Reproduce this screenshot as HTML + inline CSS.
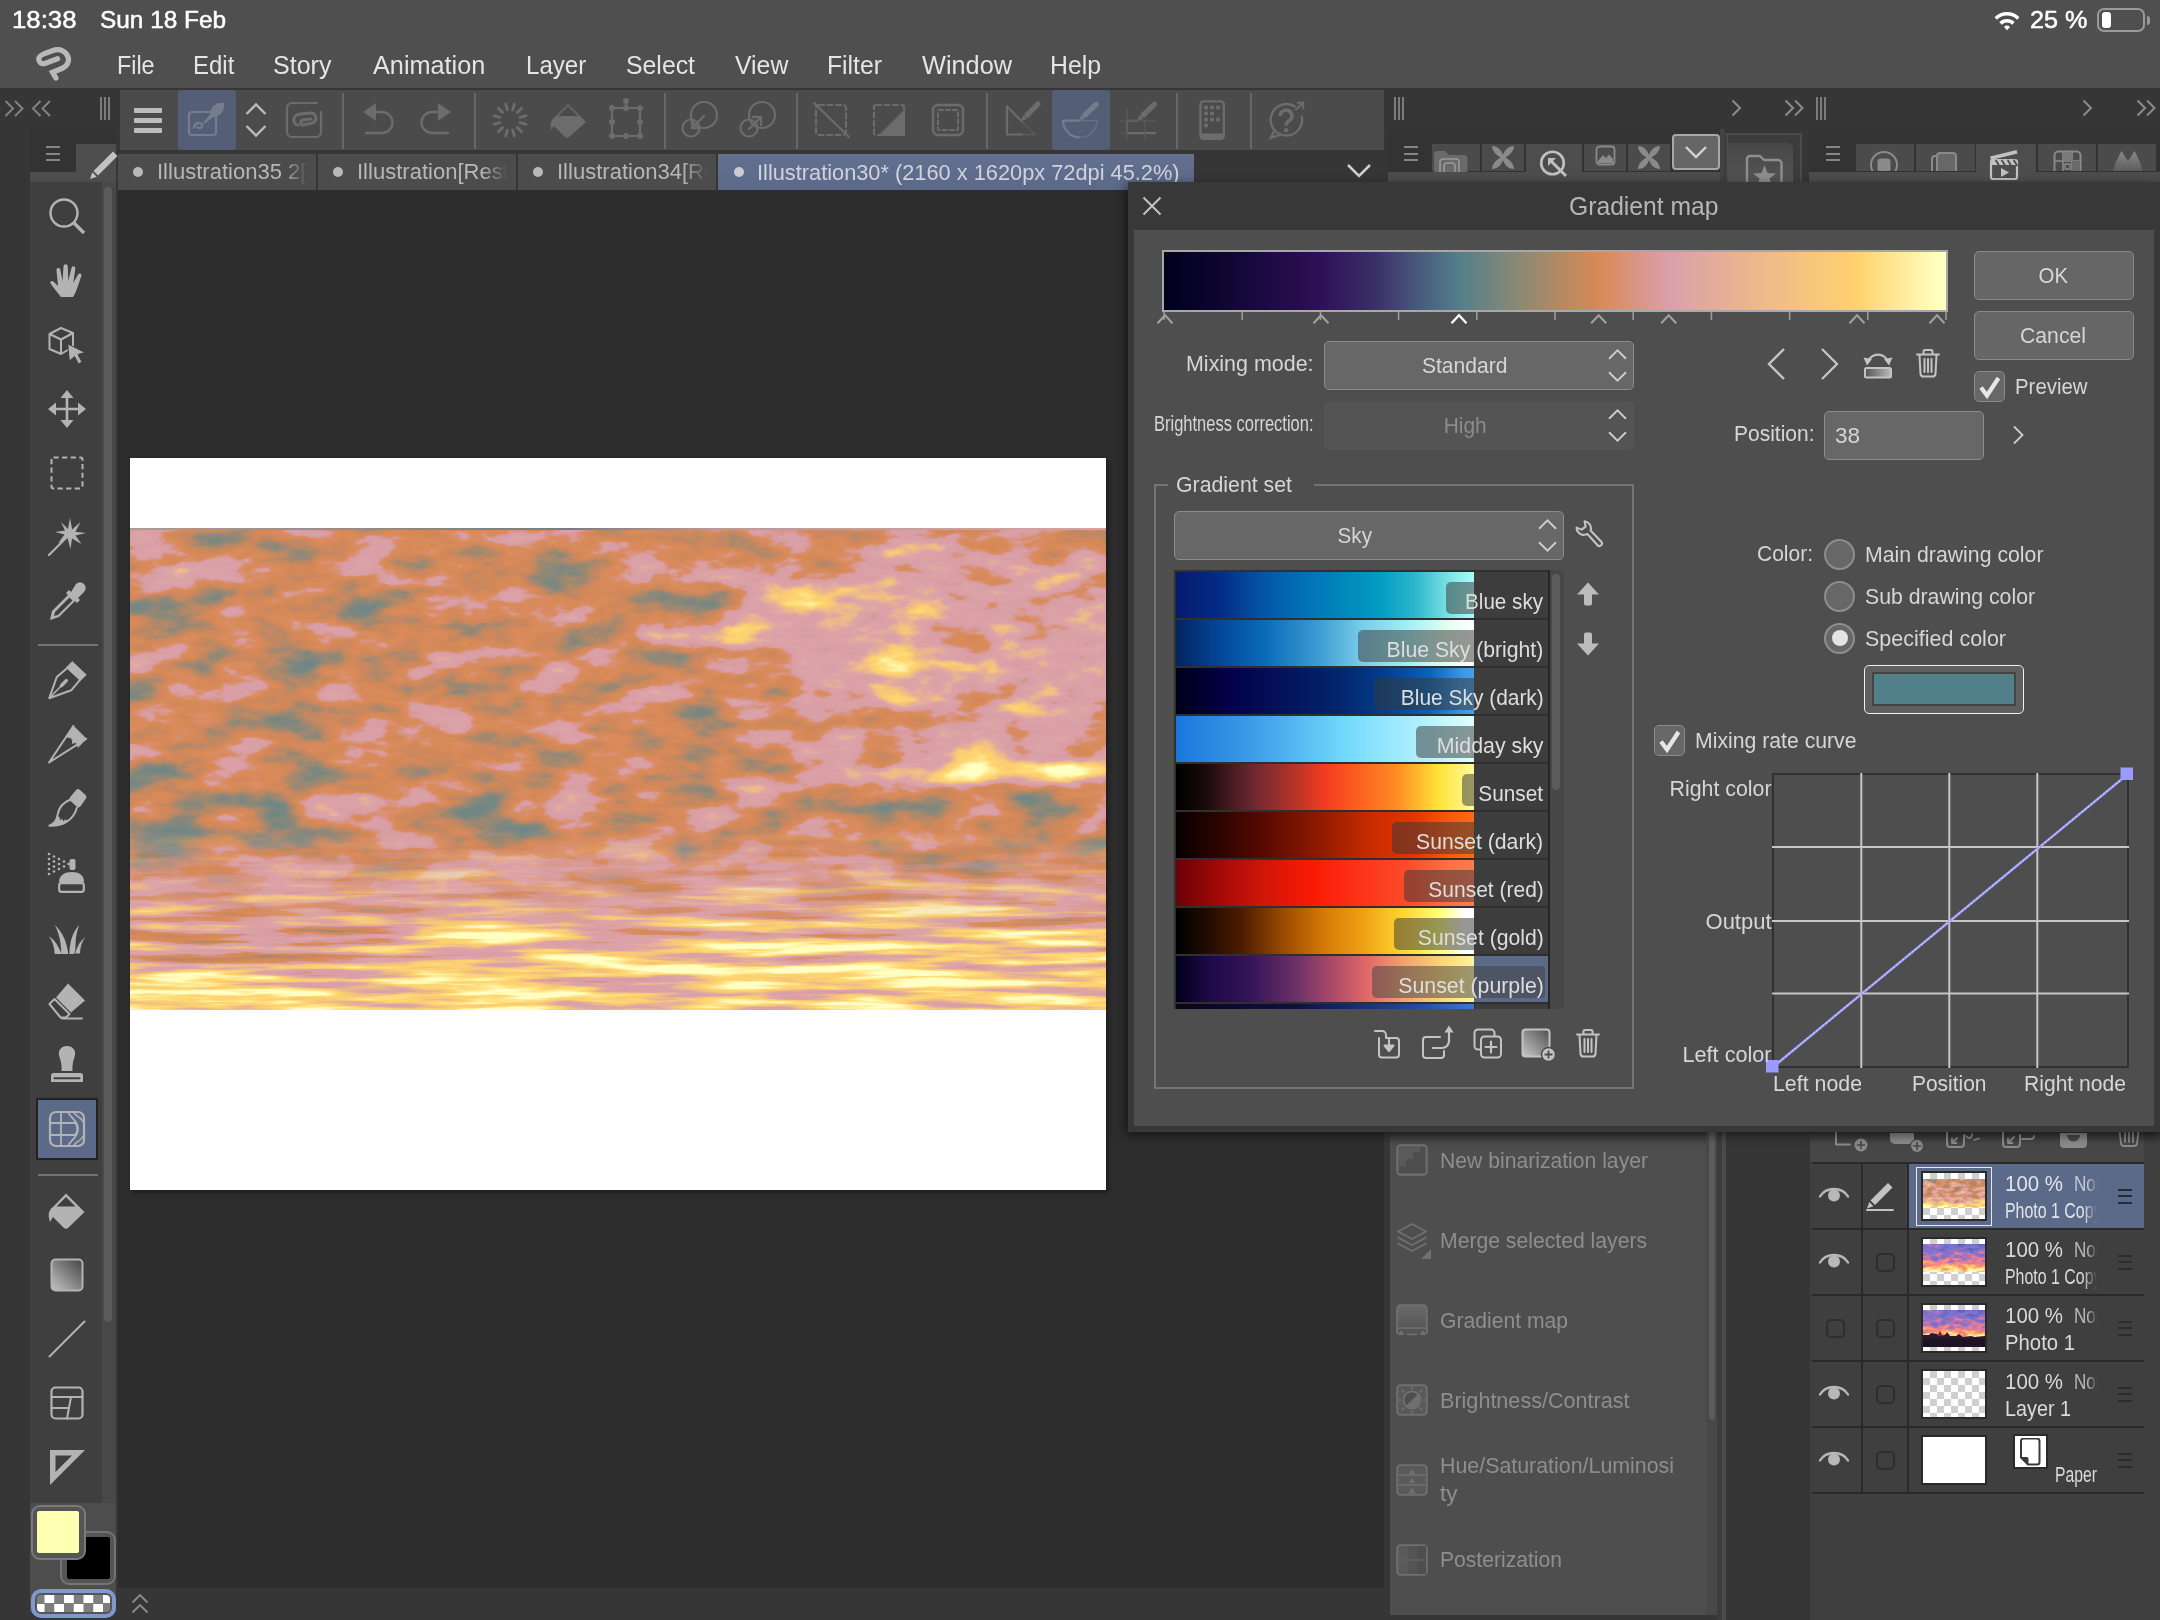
<!DOCTYPE html>
<html><head><meta charset="utf-8"><title>Gradient map</title><style>
html,body{margin:0;padding:0;}
body{width:2160px;height:1620px;overflow:hidden;background:#363636;font-family:"Liberation Sans",sans-serif;position:relative;}
div,span,svg{box-sizing:border-box;}
</style></head><body>
<!-- p_base -->
<div style="position:absolute;left:0px;top:0px;width:2160px;height:88px;background:#4f4f4f;"></div>
<div style="position:absolute;left:0px;top:88px;width:2160px;height:1532px;background:#363636;"></div>
<div style="position:absolute;left:120px;top:90px;width:1264px;height:60px;background:#4b4b4b;"></div>
<div style="position:absolute;left:118px;top:190px;width:1266px;height:1398px;background:#2d2d2d;"></div>
<div style="position:absolute;left:118px;top:1588px;width:1266px;height:32px;background:#363636;"></div>
<!-- p_top -->
<span style="position:absolute;top:6.10px;font-size:24px;line-height:28.80px;color:#ffffff;white-space:pre;left:12.00px;transform-origin:0 50%;transform:scaleX(1.0740);-webkit-text-stroke:0.5px #ffffff;">18:38</span>
<span style="position:absolute;top:6.10px;font-size:24px;line-height:28.80px;color:#ffffff;white-space:pre;left:100.00px;transform-origin:0 50%;transform:scaleX(1.0154);-webkit-text-stroke:0.5px #ffffff;">Sun 18 Feb</span>
<span style="position:absolute;top:6.10px;font-size:24px;line-height:28.80px;color:#ffffff;white-space:pre;left:2030.00px;transform-origin:0 50%;transform:scaleX(1.0511);-webkit-text-stroke:0.5px #ffffff;">25 %</span>
<svg style="position:absolute;left:1993px;top:9px;" width="28" height="22" viewBox="0 0 28 22" fill="none" stroke-linecap="round" stroke-linejoin="round"><path d="M1.5 8.2 A17.5 17.5 0 0 1 26.5 8.2 L24 10.8 A14 14 0 0 0 4 10.8 Z M6.3 13.1 A11 11 0 0 1 21.7 13.1 L19.2 15.7 A7.5 7.5 0 0 0 8.8 15.7 Z M11 18 A4.3 4.3 0 0 1 17 18 L14 21.2 Z" fill="#fff"/></svg>
<div style="position:absolute;left:2097px;top:8px;width:48px;height:24px;border:2px solid #9a9a9a;border-radius:7px;"></div>
<div style="position:absolute;left:2101.5px;top:12.3px;width:9.5px;height:15.4px;background:#fff;border-radius:3px;"></div>
<div style="position:absolute;left:2147px;top:15.5px;width:3px;height:9px;background:#9a9a9a;border-radius:0 3px 3px 0;"></div>
<span style="position:absolute;top:50.40px;font-size:26px;line-height:31.20px;color:#e4e4e4;white-space:pre;left:116.70px;transform-origin:0 50%;transform:scaleX(0.8974);">File</span>
<span style="position:absolute;top:50.40px;font-size:26px;line-height:31.20px;color:#e4e4e4;white-space:pre;left:192.70px;transform-origin:0 50%;transform:scaleX(0.9218);">Edit</span>
<span style="position:absolute;top:50.40px;font-size:26px;line-height:31.20px;color:#e4e4e4;white-space:pre;left:273.30px;transform-origin:0 50%;transform:scaleX(0.9623);">Story</span>
<span style="position:absolute;top:50.40px;font-size:26px;line-height:31.20px;color:#e4e4e4;white-space:pre;left:372.70px;transform-origin:0 50%;transform:scaleX(0.9712);">Animation</span>
<span style="position:absolute;top:50.40px;font-size:26px;line-height:31.20px;color:#e4e4e4;white-space:pre;left:525.70px;transform-origin:0 50%;transform:scaleX(0.9271);">Layer</span>
<span style="position:absolute;top:50.40px;font-size:26px;line-height:31.20px;color:#e4e4e4;white-space:pre;left:626.00px;transform-origin:0 50%;transform:scaleX(0.9548);">Select</span>
<span style="position:absolute;top:50.40px;font-size:26px;line-height:31.20px;color:#e4e4e4;white-space:pre;left:735.00px;transform-origin:0 50%;transform:scaleX(0.9536);">View</span>
<span style="position:absolute;top:50.40px;font-size:26px;line-height:31.20px;color:#e4e4e4;white-space:pre;left:827.30px;transform-origin:0 50%;transform:scaleX(0.9519);">Filter</span>
<span style="position:absolute;top:50.40px;font-size:26px;line-height:31.20px;color:#e4e4e4;white-space:pre;left:921.70px;transform-origin:0 50%;transform:scaleX(0.9732);">Window</span>
<span style="position:absolute;top:50.40px;font-size:26px;line-height:31.20px;color:#e4e4e4;white-space:pre;left:1050.00px;transform-origin:0 50%;transform:scaleX(0.9537);">Help</span>
<svg style="position:absolute;left:35px;top:47px;" width="38" height="34" viewBox="0 0 38 34" fill="none" stroke-linecap="round" stroke-linejoin="round"><path d="M22.5 11.85 L10.55 16.25 C6.5 17.6 3.4 15.2 3.8 11.6 C4.1 9.3 6.2 7.9 10.55 6.15 L18 3.4 C24.5 1.3 31 3.8 33.1 10.2 C34.6 15 31.6 19.4 27.4 21.2 L17.55 25.3 L20.9 31" stroke="#b9b9b9" stroke-width="5.3" stroke-linejoin="miter" stroke-miterlimit="10"/></svg>
<!-- p_cmd -->
<div style="position:absolute;left:134px;top:108px;width:28px;height:4.5px;background:#bcbcbc;border-radius:1px;"></div>
<div style="position:absolute;left:134px;top:118px;width:28px;height:4.5px;background:#bcbcbc;border-radius:1px;"></div>
<div style="position:absolute;left:134px;top:128px;width:28px;height:4.5px;background:#bcbcbc;border-radius:1px;"></div>
<div style="position:absolute;left:178px;top:90px;width:58px;height:60px;background:#555e77;border-radius:3px;"></div>
<svg style="position:absolute;left:186px;top:100px;" width="42" height="40" viewBox="0 0 42 40" fill="none" stroke-linecap="round" stroke-linejoin="round"><rect x="3" y="12" width="27" height="23" rx="3" stroke="#747c8e" stroke-width="2.2"/><path d="M8 28 c0-5 6-7 8-3 c1 3-3 4-5 2" stroke="#747c8e" stroke-width="2.2"/><path d="M14 27 L25 13 C24 7 30 2 38 3 C39 10 35 16 29 16 Z" fill="#747c8e"/></svg>
<svg style="position:absolute;left:244px;top:100px;" width="24" height="40" viewBox="0 0 24 40" fill="none" stroke-linecap="round" stroke-linejoin="round"><path d="M2.5 14 L12 4.5 L21.5 14 M2.5 26 L12 35.5 L21.5 26" stroke="#bcbcbc" stroke-width="2.4" stroke-linecap="butt" stroke-linejoin="miter"/></svg>
<svg style="position:absolute;left:284px;top:100px;" width="40" height="40" viewBox="0 0 40 40" fill="none" stroke-linecap="round" stroke-linejoin="round"><path d="M33 3 H8 a5 5 0 0 0 -5 5 V32 a5 5 0 0 0 5 5 H32 a5 5 0 0 0 5-5 V12" stroke="#6c6c6c" stroke-width="2.2"/><path d="M14 25 c-6-1-6-10 2-11 l10-1 c7 0 8 8 2 10 l-9 2 c-3 0-3-5 0-5 l8-1" stroke="#6c6c6c" stroke-width="3"/></svg>
<div style="position:absolute;left:342px;top:93px;width:2px;height:56px;background:#676767;"></div>
<svg style="position:absolute;left:358px;top:100px;" width="40" height="40" viewBox="0 0 40 40" fill="none" stroke-linecap="round" stroke-linejoin="round"><path d="M5 12 L18 3 V21 Z" fill="#6c6c6c"/><path d="M16 12 H24 a10.5 10.5 0 0 1 0 21 H8" stroke="#6c6c6c" stroke-width="2.4"/></svg>
<svg style="position:absolute;left:416px;top:100px;" width="40" height="40" viewBox="0 0 40 40" fill="none" stroke-linecap="round" stroke-linejoin="round"><path d="M35 12 L22 3 V21 Z" fill="#6c6c6c"/><path d="M24 12 H16 a10.5 10.5 0 0 0 0 21 H32" stroke="#6c6c6c" stroke-width="2.4"/></svg>
<div style="position:absolute;left:474px;top:93px;width:2px;height:56px;background:#676767;"></div>
<svg style="position:absolute;left:490px;top:100px;" width="40" height="40" viewBox="0 0 40 40" fill="none" stroke-linecap="round" stroke-linejoin="round"><path d="M30.1 22.7 L35.9 24.3 M27.4 27.4 L31.7 31.7 M22.7 30.1 L24.3 35.9 M17.3 30.1 L15.7 35.9 M12.6 27.4 L8.3 31.7 M9.9 22.7 L4.1 24.3 M9.9 17.3 L4.1 15.7 M12.6 12.6 L8.3 8.3 M17.3 9.9 L15.7 4.1 M22.7 9.9 L24.3 4.1 M27.4 12.6 L31.7 8.3 M30.1 17.3 L35.9 15.7 " stroke="#6c6c6c" stroke-width="2.8"/></svg>
<svg style="position:absolute;left:548px;top:100px;" width="42" height="40" viewBox="0 0 42 40" fill="none" stroke-linecap="round" stroke-linejoin="round"><path d="M20 4 L38 22 L21 37 Q19 38.5 17 37 L6 26 L3 30 Q1 20 8 16 Z" fill="#6c6c6c"/><path d="M10 16 L20 6 L30 16 Z" fill="#4b4b4b"/></svg>
<svg style="position:absolute;left:606px;top:98px;" width="40" height="42" viewBox="0 0 40 42" fill="none" stroke-linecap="round" stroke-linejoin="round"><rect x="6" y="10" width="28" height="28" stroke="#6c6c6c" stroke-width="2.2"/><path d="M20 10 V3" stroke="#6c6c6c" stroke-width="2.2"/><circle cx="6" cy="10" r="3" fill="#6c6c6c"/><circle cx="20" cy="10" r="3" fill="#6c6c6c"/><circle cx="34" cy="10" r="3" fill="#6c6c6c"/><circle cx="6" cy="24" r="3" fill="#6c6c6c"/><circle cx="34" cy="24" r="3" fill="#6c6c6c"/><circle cx="6" cy="38" r="3" fill="#6c6c6c"/><circle cx="20" cy="38" r="3" fill="#6c6c6c"/><circle cx="34" cy="38" r="3" fill="#6c6c6c"/><circle cx="20" cy="3" r="3" fill="#6c6c6c"/></svg>
<div style="position:absolute;left:664px;top:93px;width:2px;height:56px;background:#676767;"></div>
<svg style="position:absolute;left:680px;top:100px;" width="40" height="40" viewBox="0 0 40 40" fill="none" stroke-linecap="round" stroke-linejoin="round"><circle cx="24" cy="15" r="13" stroke="#6c6c6c" stroke-width="2.2"/><circle cx="11" cy="28" r="8.5" stroke="#6c6c6c" stroke-width="2.2"/><path d="M24 16 L12 28 M12 20 V28 H20" stroke="#6c6c6c" stroke-width="2.4"/></svg>
<svg style="position:absolute;left:738px;top:100px;" width="40" height="40" viewBox="0 0 40 40" fill="none" stroke-linecap="round" stroke-linejoin="round"><circle cx="24" cy="15" r="13" stroke="#6c6c6c" stroke-width="2.2"/><circle cx="11" cy="28" r="8.5" stroke="#6c6c6c" stroke-width="2.2"/><path d="M11 29 L23 17 M15 17 H23 V25" stroke="#6c6c6c" stroke-width="2.4"/></svg>
<div style="position:absolute;left:796px;top:93px;width:2px;height:56px;background:#676767;"></div>
<svg style="position:absolute;left:812px;top:100px;" width="40" height="40" viewBox="0 0 40 40" fill="none" stroke-linecap="round" stroke-linejoin="round"><rect x="4" y="5" width="30" height="30" rx="3" stroke="#6c6c6c" stroke-width="2.2" stroke-dasharray="5 3.5"/><path d="M2 3 L37 37" stroke="#6c6c6c" stroke-width="2.2"/></svg>
<svg style="position:absolute;left:870px;top:100px;" width="40" height="40" viewBox="0 0 40 40" fill="none" stroke-linecap="round" stroke-linejoin="round"><rect x="4" y="5" width="30" height="30" rx="2" stroke="#6c6c6c" stroke-width="2.2" stroke-dasharray="5 3.5"/><path d="M8 36 L35 9 V36 Z" fill="#6c6c6c"/></svg>
<svg style="position:absolute;left:929px;top:100px;" width="40" height="40" viewBox="0 0 40 40" fill="none" stroke-linecap="round" stroke-linejoin="round"><rect x="4" y="5" width="30" height="30" rx="5" stroke="#6c6c6c" stroke-width="2.4"/><rect x="9" y="10" width="20" height="20" rx="1" stroke="#6c6c6c" stroke-width="2" stroke-dasharray="4 3"/></svg>
<div style="position:absolute;left:986px;top:93px;width:2px;height:56px;background:#676767;"></div>
<div style="position:absolute;left:1052px;top:90px;width:58px;height:60px;background:#555e77;border-radius:3px;"></div>
<svg style="position:absolute;left:990px;top:90px" width="330" height="60" viewBox="990 90 330 60" fill="none" stroke-linecap="round" stroke-linejoin="round"><path d="M1007 106.5 V134.5 H1023" stroke="#6c6c6c" stroke-width="2.2" stroke-linecap="butt" stroke-linejoin="miter"/><path d="M1007 106.5 L1022 121.500" stroke="#6c6c6c" stroke-width="2"/><path d="M1022 121.500 L1035 134.500 H1023" stroke="#5c5c5c" stroke-width="1.400"/><path d="M1021.3 121.0 L1027.1 119.0 L1023.2 115.2 Z" fill="#6c6c6c"/><path d="M1027.3 114.9 L1037.9 104.1" stroke="#6c6c6c" stroke-width="5.4" stroke-linecap="round"/><path d="M1026.0 116.2 L1028.7 113.5" stroke="#6c6c6c" stroke-width="5.4" stroke-linecap="butt"/><path d="M1079.800 120.600 H1063 A17 16.600 0 0 0 1080 137.400" stroke="#747c8e" stroke-width="2.200" stroke-linecap="butt"/><path d="M1079.800 120.600 H1097 A17 16.600 0 0 1 1080 137.400" stroke="#69718a" stroke-width="1.300"/><path d="M1079.5 120.3 L1085.3 118.4 L1081.6 114.5 Z" fill="#747c8e"/><path d="M1085.6 114.4 L1096.1 104.4" stroke="#747c8e" stroke-width="5.4" stroke-linecap="round"/><path d="M1084.3 115.7 L1087.1 113.0" stroke="#747c8e" stroke-width="5.4" stroke-linecap="butt"/><path d="M1138 120.800 H1127 V133.200 H1156" stroke="#6c6c6c" stroke-width="2.200" stroke-linecap="butt" stroke-linejoin="miter"/><path d="M1120 120.800 H1156 M1120 133.200 H1127 M1127 108 V138 M1145 120 V138" stroke="#5a5a5a" stroke-width="1.300"/><path d="M1137.5 120.5 L1143.3 118.7 L1139.6 114.8 Z" fill="#6c6c6c"/><path d="M1143.7 114.6 L1154.4 104.4" stroke="#6c6c6c" stroke-width="5.4" stroke-linecap="round"/><path d="M1142.4 115.9 L1145.1 113.3" stroke="#6c6c6c" stroke-width="5.4" stroke-linecap="butt"/><rect x="1200.500" y="101.400" width="23.300" height="37.300" rx="3" stroke="#6c6c6c" stroke-width="2.400"/><path d="M1200.500 133.500 H1223.800 V136 a3 3 0 0 1 -3 3 H1203.500 a3 3 0 0 1 -3 -3 Z" fill="#6c6c6c"/><rect x="1204.1" y="105.6" width="3.800" height="3.800" fill="#6c6c6c"/><rect x="1210.1" y="105.6" width="3.800" height="3.800" fill="#6c6c6c"/><rect x="1216.1" y="105.6" width="3.800" height="3.800" fill="#6c6c6c"/><rect x="1204.1" y="111.6" width="3.800" height="3.800" fill="#6c6c6c"/><rect x="1210.1" y="111.6" width="3.800" height="3.800" fill="#6c6c6c"/><rect x="1204.1" y="117.6" width="3.800" height="3.800" fill="#6c6c6c"/><rect x="1210.1" y="117.6" width="3.800" height="3.800" fill="#6c6c6c"/><rect x="1216.1" y="117.6" width="3.800" height="3.800" fill="#6c6c6c"/><rect x="1204.1" y="123.6" width="3.800" height="3.800" fill="#6c6c6c"/><path d="M1295.500 107 A15.700 15.700 0 1 0 1301.500 115.500" stroke="#6c6c6c" stroke-width="2.300" stroke-linecap="butt"/><path d="M1274.500 130 L1271 137.800 L1280 134.800" stroke="#6c6c6c" stroke-width="2.300" stroke-linejoin="miter"/><path d="M1295.500 110 L1303 102.800 M1297 102.800 H1303.200 V109" stroke="#6c6c6c" stroke-width="2" stroke-linecap="butt" stroke-linejoin="miter"/><path d="M1280.300 116 a5.800 5.800 0 1 1 8.600 5 c-2.200 1.300 -2.800 2.300 -2.800 4.600" stroke="#6c6c6c" stroke-width="3.700" stroke-linecap="butt"/><circle cx="1286.100" cy="130.300" r="2.300" fill="#6c6c6c"/></svg>
<div style="position:absolute;left:1176px;top:93px;width:2px;height:56px;background:#676767;"></div>
<div style="position:absolute;left:1250px;top:93px;width:2px;height:56px;background:#676767;"></div>
<!-- p_tabs -->
<div style="position:absolute;left:118px;top:154px;width:198px;height:36px;background:#4c4c4c;overflow:hidden;"><div style="position:absolute;left:15px;top:13px;width:10px;height:10px;border-radius:5px;background:#b8b8b8"></div><span style="position:absolute;top:5.10px;font-size:22px;line-height:26.40px;color:#b8b8b8;white-space:pre;left:38.70px;transform-origin:0 50%;transform:scaleX(1.0020);">Illustration35 2[l</span><div style="position:absolute;right:0;top:0;width:34px;height:36px;background:linear-gradient(90deg,rgba(76,76,76,0),#4c4c4c 75%)"></div></div>
<div style="position:absolute;left:318px;top:154px;width:198px;height:36px;background:#4c4c4c;overflow:hidden;"><div style="position:absolute;left:15px;top:13px;width:10px;height:10px;border-radius:5px;background:#b8b8b8"></div><span style="position:absolute;top:5.10px;font-size:22px;line-height:26.40px;color:#b8b8b8;white-space:pre;left:38.70px;transform-origin:0 50%;transform:scaleX(1.0020);">Illustration[Resto</span><div style="position:absolute;right:0;top:0;width:34px;height:36px;background:linear-gradient(90deg,rgba(76,76,76,0),#4c4c4c 75%)"></div></div>
<div style="position:absolute;left:518px;top:154px;width:198px;height:36px;background:#4c4c4c;overflow:hidden;"><div style="position:absolute;left:15px;top:13px;width:10px;height:10px;border-radius:5px;background:#b8b8b8"></div><span style="position:absolute;top:5.10px;font-size:22px;line-height:26.40px;color:#b8b8b8;white-space:pre;left:38.70px;transform-origin:0 50%;transform:scaleX(1.0020);">Illustration34[Re</span><div style="position:absolute;right:0;top:0;width:34px;height:36px;background:linear-gradient(90deg,rgba(76,76,76,0),#4c4c4c 75%)"></div></div>
<div style="position:absolute;left:718px;top:154px;width:476px;height:36px;background:linear-gradient(180deg,#64708f,#5b6888);"><div style="position:absolute;left:16px;top:13px;width:10px;height:10px;border-radius:5px;background:#c9cdd6"></div><span style="position:absolute;top:4.80px;font-size:22.5px;line-height:27.00px;color:#cfd3dc;white-space:pre;left:38.70px;transform-origin:0 50%;transform:scaleX(0.9679);">Illustration30* (2160 x 1620px 72dpi 45.2%)</span></div>
<svg style="position:absolute;left:1344px;top:160px;" width="30" height="22" viewBox="0 0 30 22" fill="none" stroke-linecap="round" stroke-linejoin="round"><path d="M4 5 L15 16 L26 5" stroke="#cfcfcf" stroke-width="2.6" stroke-linecap="butt" stroke-linejoin="miter"/></svg>
<!-- p_left -->
<svg style="position:absolute;left:3px;top:98px;" width="52" height="20" viewBox="0 0 52 20" fill="none" stroke-linecap="round" stroke-linejoin="round"><path d="M2.5 3 L10 10.5 L2.5 18 M12 3 L19.5 10.5 L12 18 M37.5 3 L30 10.5 L37.5 18 M47 3 L39.5 10.5 L47 18" stroke="#828282" stroke-width="2" stroke-linecap="butt" stroke-linejoin="miter"/></svg>
<div style="position:absolute;left:100px;top:96.5px;width:1.8px;height:23.5px;background:#7c7c7c;"></div>
<div style="position:absolute;left:104.2px;top:96.5px;width:1.8px;height:23.5px;background:#7c7c7c;"></div>
<div style="position:absolute;left:108.4px;top:96.5px;width:1.8px;height:23.5px;background:#7c7c7c;"></div>
<div style="position:absolute;left:30px;top:129px;width:86px;height:43px;background:#333333;"></div>
<div style="position:absolute;left:45.7px;top:146px;width:14.3px;height:2px;background:#858585;"></div>
<div style="position:absolute;left:45.7px;top:152.5px;width:14.3px;height:2px;background:#858585;"></div>
<div style="position:absolute;left:45.7px;top:159px;width:14.3px;height:2px;background:#858585;"></div>
<div style="position:absolute;left:75.7px;top:144px;width:40.3px;height:28px;background:#4d4d4d;"></div>
<div style="position:absolute;left:30px;top:171.5px;width:86px;height:10px;background:#4d4d4d;"></div>
<svg style="position:absolute;left:86px;top:146px;" width="32" height="34" viewBox="0 0 32 34" fill="none" stroke-linecap="round" stroke-linejoin="round"><path d="M27 5.5 L31.5 10 L12 29.5 L7.5 25 Z" fill="#c2c2c2"/><path d="M6.3 26.3 L10.7 30.7 L4 33 Z" fill="#c2c2c2"/></svg>
<div style="position:absolute;left:30px;top:181.5px;width:86px;height:1322px;background:#3f3f3f;"></div>
<div style="position:absolute;left:102px;top:181.5px;width:14px;height:1322px;background:#484848;"></div>
<div style="position:absolute;left:104.3px;top:186.5px;width:7.7px;height:1135px;background:#5b5b5b;border-radius:4px;"></div>
<div style="position:absolute;left:38px;top:644px;width:60px;height:2px;background:#727272;"></div>
<div style="position:absolute;left:38px;top:1174px;width:60px;height:2px;background:#727272;"></div>
<svg style="position:absolute;left:47.0px;top:197.0px;" width="40" height="40" viewBox="0 0 40 40" fill="none" stroke-linecap="round" stroke-linejoin="round"><circle cx="17" cy="16" r="13.5" stroke="#b3b3b3" stroke-width="2.4"/><path d="M27 26 L37 36" stroke="#b3b3b3" stroke-width="3.4" stroke-linecap="butt"/></svg>
<svg style="position:absolute;left:47.0px;top:261.0px;" width="40" height="40" viewBox="0 0 40 40" fill="none" stroke-linecap="round" stroke-linejoin="round"><path d="M14 36 C9 30 6 26 3.5 22.5 C2.5 20.5 5 19 7 21 L11 25 L9.5 9.5 C9.3 6.5 13 6.3 13.4 9 L15.5 20 L16.5 5.5 C16.7 2.5 20.6 2.6 20.8 5.5 L21.3 20 L24.5 7 C25.2 4.3 28.8 5.1 28.3 8 L26.3 22 L31 13.5 C32.3 11.3 35.3 12.8 34.3 15.3 C31 24 30 30 26 36 Z" fill="#b3b3b3"/></svg>
<svg style="position:absolute;left:47.0px;top:325.0px;" width="40" height="40" viewBox="0 0 40 40" fill="none" stroke-linecap="round" stroke-linejoin="round"><path d="M14 3 L26 8 V22 L14 29 L2.5 24 V9 Z M2.5 9 L14 14.5 L26 8 M14 14.5 V29" stroke="#b3b3b3" stroke-width="2"/><path d="M21 19 L38 27.5 L31 29.5 L35 37 L31.5 39 L27.5 31.5 L22.5 36 Z" fill="#b3b3b3" stroke="#3f3f3f" stroke-width="1"/></svg>
<svg style="position:absolute;left:47.0px;top:389.0px;" width="40" height="40" viewBox="0 0 40 40" fill="none" stroke-linecap="round" stroke-linejoin="round"><path d="M20 7 V33 M7 20 H33" stroke="#b3b3b3" stroke-width="2.6" stroke-linecap="butt"/><path d="M20 1 L26.5 9 H13.5 Z M20 39 L26.5 31 H13.5 Z M1 20 L9 13.5 V26.5 Z M39 20 L31 13.5 V26.5 Z" fill="#b3b3b3"/></svg>
<svg style="position:absolute;left:47.0px;top:453.0px;" width="40" height="40" viewBox="0 0 40 40" fill="none" stroke-linecap="round" stroke-linejoin="round"><rect x="4.5" y="4.5" width="31" height="31" rx="2" stroke="#b3b3b3" stroke-width="2" stroke-dasharray="5.2 3.4" stroke-linecap="butt"/></svg>
<svg style="position:absolute;left:47.0px;top:517.0px;" width="40" height="40" viewBox="0 0 40 40" fill="none" stroke-linecap="round" stroke-linejoin="round"><path d="M2 38 L20 20" stroke="#b3b3b3" stroke-width="2.2"/><path d="M23 1 L25.2 12.5 L33.5 5 L28.5 14.8 L39 16 L28.5 18.5 L34.5 27 L25 21.5 L23.5 32 L20.5 21 L11 26.5 L17.5 17.5 L8 15 L18 13.5 L14 5 L21 12 Z" fill="#b3b3b3"/></svg>
<svg style="position:absolute;left:47.0px;top:581.0px;" width="40" height="40" viewBox="0 0 40 40" fill="none" stroke-linecap="round" stroke-linejoin="round"><path d="M29 3 a5.5 5.5 0 0 1 8 8 l-6 6 l2 2 l-3 3 l-2-2 L12 36 L3 39 L5 30 L21 14 l-2-2 l3-3 l2 2 Z" fill="#b3b3b3"/><path d="M22.5 16.5 L8 31 L7 35 L11 34 L25.5 19.5 Z" fill="#3f3f3f"/></svg>
<svg style="position:absolute;left:46.0px;top:851.0px;" width="42" height="44" viewBox="0 0 42 44" fill="none" stroke-linecap="round" stroke-linejoin="round"><circle cx="3.0" cy="3.0" r="1.3" fill="#b3b3b3"/><circle cx="3.0" cy="8.0" r="1.3" fill="#b3b3b3"/><circle cx="3.0" cy="13.0" r="1.3" fill="#b3b3b3"/><circle cx="3.0" cy="18.0" r="1.3" fill="#b3b3b3"/><circle cx="3.0" cy="23.0" r="1.3" fill="#b3b3b3"/><circle cx="8.0" cy="5.5" r="1.3" fill="#b3b3b3"/><circle cx="8.0" cy="10.5" r="1.3" fill="#b3b3b3"/><circle cx="8.0" cy="15.5" r="1.3" fill="#b3b3b3"/><circle cx="8.0" cy="20.5" r="1.3" fill="#b3b3b3"/><circle cx="13.0" cy="8.0" r="1.3" fill="#b3b3b3"/><circle cx="13.0" cy="13.0" r="1.3" fill="#b3b3b3"/><circle cx="13.0" cy="18.0" r="1.3" fill="#b3b3b3"/><circle cx="18.0" cy="10.5" r="1.3" fill="#b3b3b3"/><circle cx="18.0" cy="15.5" r="1.3" fill="#b3b3b3"/><circle cx="22.5" cy="13.0" r="1.3" fill="#b3b3b3"/><rect x="23.5" y="8" width="6" height="11" rx="2" fill="#b3b3b3"/><path d="M13 31 C13 24 19 21 26 21 C33 21 38 24 38 31 Z" fill="#b3b3b3"/><rect x="13.2" y="32.2" width="24.6" height="8.6" rx="2" stroke="#b3b3b3" stroke-width="2.2"/></svg>
<svg style="position:absolute;left:30px;top:650px" width="86" height="320" viewBox="30 650 86 320" fill="none" stroke-linecap="round" stroke-linejoin="round"><path d="M72.400 661.800 L86.200 674.700 L80.300 680.600 L66.500 667.800 Z" fill="#b3b3b3" stroke="#b3b3b3" stroke-width="1" stroke-linejoin="round"/><path d="M67 668.300 L56.800 677 L49.300 698.200 L71.200 690.300 L79.800 680.200" stroke="#b3b3b3" stroke-width="2" stroke-linejoin="round"/><path d="M49.500 698 L63 684" stroke="#b3b3b3" stroke-width="1.600"/><path d="M61.500 685.500 L66.300 680.600" stroke="#b3b3b3" stroke-width="3.400" stroke-linecap="round"/><path d="M73.400 726 L49.100 762.500 L86.200 738.800" stroke="#b3b3b3" stroke-width="2" stroke-linejoin="round"/><path d="M73.400 726 L86.200 738.800 L78 747.300 C78.500 743.500 75.500 741.500 72.500 743.500 C73.500 739.500 70.500 736.500 66.800 737.200 Z" fill="#b3b3b3" stroke="#b3b3b3" stroke-width="1" stroke-linejoin="round"/><path d="M76.500 789.500 Q78.400 788.500 80 790 L85.500 795 Q87 796.500 86 798.500 L80.500 806.300 Q78.500 808.500 76.800 806.800 L70 800.500 Q68.500 798.800 70.300 797 Z" fill="#b3b3b3"/><path d="M70.500 799.500 C63 802.500 58.500 808 57.500 815 C57 820 53.500 824 49.300 825.700 C61 826.500 73 821.500 77 807.500" stroke="#b3b3b3" stroke-width="2" stroke-linejoin="round"/><path d="M57.300 816 C57 820 53.500 824 49.300 825.700 C56 826.300 62.500 824.500 67.500 820.500 L65 819.500 L63.500 821.500 L62 818.500 L60 820.500 L59.500 817 Z" fill="#b3b3b3"/><path d="M48.800 936.200 C55 940 58.500 946 61.600 953.900 H54.700 C54.500 947 52.500 941 48.800 936.200 Z" fill="#b3b3b3"/><path d="M54.700 925 C62.500 932 66.800 942 68.300 953.900 H61.300 C61.300 943 59 933 54.700 925 Z" fill="#b3b3b3"/><path d="M79.300 925 C72.500 932 69.800 942 69.300 953.900 H75.600 C75 943 76 933 79.300 925 Z" fill="#b3b3b3"/><path d="M86.200 936.200 C80 940 77 946 74.500 953.900 H80.300 C80.500 947 82.500 941 86.200 936.200 Z" fill="#b3b3b3" stroke="#3f3f3f" stroke-width="0.800"/></svg>
<svg style="position:absolute;left:47.0px;top:981.0px;" width="40" height="40" viewBox="0 0 40 40" fill="none" stroke-linecap="round" stroke-linejoin="round"><path d="M21 2.5 L38 19.5 L24 31.5 L9 16.5 Z" fill="#b3b3b3"/><path d="M7.5 18 L2.5 23 L13.5 36.5 H19 L22.5 33 Z" stroke="#b3b3b3" stroke-width="2"/><path d="M15 37.5 H35" stroke="#b3b3b3" stroke-width="2"/></svg>
<svg style="position:absolute;left:47.0px;top:1044.0px;" width="40" height="40" viewBox="0 0 40 40" fill="none" stroke-linecap="round" stroke-linejoin="round"><path d="M20 2 C27 2 29.5 8 27.5 13 C26 17 25 22 25.5 27 H14.5 C15 22 14 17 12.5 13 C10.5 8 13 2 20 2 Z" fill="#b3b3b3"/><path d="M4 38 V31.5 a2.5 2.5 0 0 1 2.5 -2.5 H33.5 a2.5 2.5 0 0 1 2.5 2.5 V38 Z" fill="#b3b3b3"/><path d="M7.5 34.2 H32.5" stroke="#3f3f3f" stroke-width="2"/></svg>
<div style="position:absolute;left:36px;top:1098px;width:62px;height:62px;background:#5c6a8a;border:2px solid #222;"></div>
<svg style="position:absolute;left:47.0px;top:1109.0px;" width="40" height="40" viewBox="0 0 40 40" fill="none" stroke-linecap="round" stroke-linejoin="round"><rect x="3" y="3" width="34" height="34" rx="6" stroke="#b3b3b3" stroke-width="2.2"/><path d="M14 3 V37 M3 14 H28 M3 26 H28 M21 3 C23 9 31 11 31 20 C31 29 23 31 21 37 M28 14 C31 16 31 24 28 26" stroke="#b3b3b3" stroke-width="1.800"/><path d="M27 3.500 C28 7 36 9 36.500 14 M27 36.500 C28 33 36 31 36.500 26" stroke="#b3b3b3" stroke-width="1.600"/></svg>
<svg style="position:absolute;left:46.0px;top:1192.0px;" width="42" height="40" viewBox="0 0 42 40" fill="none" stroke-linecap="round" stroke-linejoin="round"><path d="M20 1.5 L38.5 20 L22 36 Q20 37.5 18 36 L7 25 L4 30 Q0 19 8 14 Z" fill="#b3b3b3"/><path d="M10.5 14.5 L20 5 L29.5 14.5 Z" fill="#3f3f3f"/></svg>
<svg style="position:absolute;left:50px;top:1258px" width="34" height="34" viewBox="0 0 34 34"><defs><linearGradient id="gt" x1="1" y1="0" x2="0" y2="1"><stop offset="0" stop-color="#444"/><stop offset="1" stop-color="#c4c4c4"/></linearGradient></defs><rect x="1.5" y="1.5" width="31" height="31" rx="4" fill="url(#gt)" stroke="#b3b3b3" stroke-width="2"/></svg>
<svg style="position:absolute;left:47.0px;top:1319.0px;" width="40" height="40" viewBox="0 0 40 40" fill="none" stroke-linecap="round" stroke-linejoin="round"><path d="M2.5 37.5 L37.5 2.5" stroke="#b3b3b3" stroke-width="2"/></svg>
<svg style="position:absolute;left:47.0px;top:1383.0px;" width="40" height="40" viewBox="0 0 40 40" fill="none" stroke-linecap="round" stroke-linejoin="round"><rect x="4.5" y="4.5" width="31" height="31" rx="4" stroke="#b3b3b3" stroke-width="2.2"/><path d="M4.5 14 H35.5 M24 14 L20 35.5 M4.5 25 H22" stroke="#b3b3b3" stroke-width="2"/></svg>
<svg style="position:absolute;left:47.0px;top:1447.0px;" width="40" height="40" viewBox="0 0 40 40" fill="none" stroke-linecap="round" stroke-linejoin="round"><path d="M3 3 H38 L3 38 Z M8.5 8.5 V25 L25 8.5 Z" fill="#b3b3b3" fill-rule="evenodd"/></svg>
<div style="position:absolute;left:30px;top:1503px;width:86px;height:109px;background:#4d4d4d;"></div>
<div style="position:absolute;left:60px;top:1530.5px;width:56px;height:54.5px;background:#555555;border:2px solid #747474;border-radius:9px;"></div>
<div style="position:absolute;left:66.5px;top:1536.5px;width:43px;height:42.5px;background:#000;border-radius:2px;"></div>
<div style="position:absolute;left:30.5px;top:1505px;width:55.5px;height:54.5px;background:#555555;border:2px solid #7a7a7a;border-radius:9px;"></div>
<div style="position:absolute;left:36.7px;top:1511px;width:42.6px;height:42.4px;background:#ffffb2;border-radius:2px;"></div>
<div style="position:absolute;left:30.5px;top:1588.5px;width:85.5px;height:29px;background:#555;border:4.5px solid #8098cc;border-radius:10px;"></div>
<div style="position:absolute;left:37px;top:1595px;width:72.5px;height:16.5px;border-radius:4px;background:repeating-conic-gradient(#ffffff 0% 25%,#7e7e7e 0% 50%) -2.25px 0/19.5px 17px;"></div>
<svg style="position:absolute;left:130px;top:1593px;" width="20" height="22" viewBox="0 0 20 22" fill="none" stroke-linecap="round" stroke-linejoin="round"><path d="M2.5 9.5 L10 2 L17.5 9.5 M2.5 19.5 L10 12 L17.5 19.5" stroke="#8c8c8c" stroke-width="1.8" stroke-linecap="butt" stroke-linejoin="miter"/></svg>
<!-- p_canvas -->
<div style="position:absolute;left:130px;top:458px;width:976px;height:732px;background:#ffffff;box-shadow:2px 2px 5px rgba(0,0,0,.45);overflow:hidden;"><svg style="position:absolute;left:0;top:71px" width="976" height="481" viewBox="0 0 976 481"><defs><linearGradient id="skb" x1="0" y1="0" x2="0" y2="1"><stop offset="0" stop-color="#8b8b8b"/><stop offset="0.6" stop-color="#8c8c8c"/><stop offset="0.72" stop-color="#999999"/><stop offset="0.8" stop-color="#a6a6a6"/><stop offset="0.88" stop-color="#b8b8b8"/><stop offset="0.95" stop-color="#cccccc"/><stop offset="1" stop-color="#dbdbdb"/></linearGradient><linearGradient id="skm" x1="0" y1="0" x2="0" y2="1"><stop offset="0.62" stop-color="#fff" stop-opacity="0"/><stop offset="0.84" stop-color="#fff" stop-opacity="1"/></linearGradient><mask id="skmask"><rect width="976" height="481" fill="url(#skm)"/></mask><filter id="skbl" x="-20%" y="-20%" width="140%" height="140%"><feGaussianBlur stdDeviation="10 6"/></filter><filter id="skf" x="0" y="0" width="100%" height="100%" color-interpolation-filters="sRGB">
<feTurbulence type="fractalNoise" baseFrequency="0.015 0.034" numOctaves="4" seed="11" result="n1"/>
<feColorMatrix in="n1" type="matrix" values="1 0 0 0 0  1 0 0 0 0  1 0 0 0 0  0 0 0 0 1" result="ng"/>
<feComposite in="SourceGraphic" in2="ng" operator="arithmetic" k1="0" k2="1" k3="0.66" k4="-0.315" result="m1"/>
<feComponentTransfer><feFuncR type="table" tableValues="0.439 0.439 0.439 0.439 0.439 0.439 0.439 0.439 0.439 0.439 0.439 0.439 0.439 0.439 0.439 0.439 0.439 0.439 0.439 0.439 0.439 0.439 0.444 0.458 0.471 0.484 0.497 0.515 0.536 0.558 0.579 0.602 0.629 0.656 0.684 0.711 0.734 0.758 0.781 0.803 0.816 0.829 0.842 0.848 0.850 0.852 0.854 0.854 0.853 0.852 0.851 0.853 0.854 0.856 0.857 0.859 0.860 0.862 0.868 0.883 0.897 0.911 0.925 0.938 0.950 0.963 0.975 0.983 0.988 0.992 0.996 1.000 1.000 1.000 1.000 1.000 1.000 1.000 1.000 1.000 1.000"/><feFuncG type="table" tableValues="0.529 0.529 0.529 0.529 0.529 0.529 0.529 0.529 0.529 0.529 0.529 0.529 0.529 0.529 0.529 0.529 0.529 0.529 0.529 0.529 0.529 0.529 0.530 0.531 0.531 0.532 0.533 0.534 0.535 0.536 0.537 0.537 0.536 0.535 0.534 0.534 0.535 0.535 0.536 0.537 0.537 0.537 0.537 0.540 0.544 0.547 0.551 0.564 0.583 0.601 0.620 0.623 0.626 0.629 0.632 0.635 0.638 0.641 0.650 0.668 0.686 0.704 0.722 0.739 0.757 0.775 0.793 0.805 0.814 0.823 0.832 0.843 0.863 0.882 0.902 0.922 0.941 0.956 0.971 0.985 1.000"/><feFuncB type="table" tableValues="0.525 0.525 0.525 0.525 0.525 0.525 0.525 0.525 0.525 0.525 0.525 0.525 0.525 0.525 0.525 0.525 0.525 0.525 0.525 0.525 0.525 0.525 0.523 0.517 0.512 0.506 0.500 0.492 0.482 0.473 0.463 0.453 0.441 0.429 0.417 0.406 0.396 0.386 0.376 0.367 0.359 0.352 0.344 0.348 0.358 0.369 0.380 0.429 0.503 0.577 0.651 0.652 0.653 0.654 0.655 0.656 0.657 0.658 0.649 0.624 0.599 0.574 0.549 0.528 0.506 0.485 0.463 0.453 0.449 0.446 0.442 0.446 0.483 0.519 0.555 0.591 0.627 0.663 0.698 0.733 0.769"/></feComponentTransfer></filter>
<filter id="skf2" x="0" y="0" width="100%" height="100%" color-interpolation-filters="sRGB">
<feTurbulence type="fractalNoise" baseFrequency="0.007 0.085" numOctaves="4" seed="4" result="n2"/>
<feColorMatrix in="n2" type="matrix" values="0 1 0 0 0  0 1 0 0 0  0 1 0 0 0  0 0 0 0 1" result="ng2"/>
<feComposite in="SourceGraphic" in2="ng2" operator="arithmetic" k1="0" k2="1" k3="0.9" k4="-0.45" result="m2"/>
<feComponentTransfer><feFuncR type="table" tableValues="0.439 0.439 0.439 0.439 0.439 0.439 0.439 0.439 0.439 0.439 0.439 0.439 0.439 0.439 0.439 0.439 0.439 0.439 0.439 0.439 0.439 0.439 0.444 0.458 0.471 0.484 0.497 0.515 0.536 0.558 0.579 0.602 0.629 0.656 0.684 0.711 0.734 0.758 0.781 0.803 0.816 0.829 0.842 0.848 0.850 0.852 0.854 0.854 0.853 0.852 0.851 0.853 0.854 0.856 0.857 0.859 0.860 0.862 0.868 0.883 0.897 0.911 0.925 0.938 0.950 0.963 0.975 0.983 0.988 0.992 0.996 1.000 1.000 1.000 1.000 1.000 1.000 1.000 1.000 1.000 1.000"/><feFuncG type="table" tableValues="0.529 0.529 0.529 0.529 0.529 0.529 0.529 0.529 0.529 0.529 0.529 0.529 0.529 0.529 0.529 0.529 0.529 0.529 0.529 0.529 0.529 0.529 0.530 0.531 0.531 0.532 0.533 0.534 0.535 0.536 0.537 0.537 0.536 0.535 0.534 0.534 0.535 0.535 0.536 0.537 0.537 0.537 0.537 0.540 0.544 0.547 0.551 0.564 0.583 0.601 0.620 0.623 0.626 0.629 0.632 0.635 0.638 0.641 0.650 0.668 0.686 0.704 0.722 0.739 0.757 0.775 0.793 0.805 0.814 0.823 0.832 0.843 0.863 0.882 0.902 0.922 0.941 0.956 0.971 0.985 1.000"/><feFuncB type="table" tableValues="0.525 0.525 0.525 0.525 0.525 0.525 0.525 0.525 0.525 0.525 0.525 0.525 0.525 0.525 0.525 0.525 0.525 0.525 0.525 0.525 0.525 0.525 0.523 0.517 0.512 0.506 0.500 0.492 0.482 0.473 0.463 0.453 0.441 0.429 0.417 0.406 0.396 0.386 0.376 0.367 0.359 0.352 0.344 0.348 0.358 0.369 0.380 0.429 0.503 0.577 0.651 0.652 0.653 0.654 0.655 0.656 0.657 0.658 0.649 0.624 0.599 0.574 0.549 0.528 0.506 0.485 0.463 0.453 0.449 0.446 0.442 0.446 0.483 0.519 0.555 0.591 0.627 0.663 0.698 0.733 0.769"/></feComponentTransfer></filter></defs><g filter="url(#skf)"><rect width="976" height="481" fill="url(#skb)"/><g filter="url(#skbl)"><ellipse cx="870" cy="240" rx="115" ry="11" fill="#fafafa" opacity="0.95"/><ellipse cx="800" cy="130" rx="230" ry="110" fill="#b2b2b2" opacity="0.85"/><ellipse cx="690" cy="55" rx="70" ry="22" fill="#cccccc" opacity="0.7"/><ellipse cx="795" cy="85" rx="35" ry="28" fill="#cccccc" opacity="0.7"/><ellipse cx="850" cy="150" rx="40" ry="14" fill="#c7c7c7" opacity="0.6"/><ellipse cx="205" cy="275" rx="85" ry="24" fill="#adadad" opacity="0.9"/><ellipse cx="40" cy="40" rx="50" ry="25" fill="#9e9e9e" opacity="0.7"/><ellipse cx="300" cy="200" rx="60" ry="14" fill="#a8a8a8" opacity="0.6"/><ellipse cx="560" cy="110" rx="40" ry="14" fill="#b2b2b2" opacity="0.5"/><ellipse cx="380" cy="90" rx="40" ry="12" fill="#a8a8a8" opacity="0.5"/><ellipse cx="620" cy="290" rx="50" ry="10" fill="#adadad" opacity="0.5"/><ellipse cx="230" cy="150" rx="360" ry="190" fill="#808080" opacity="0.55"/><ellipse cx="560" cy="250" rx="260" ry="110" fill="#858585" opacity="0.4"/><ellipse cx="55" cy="285" rx="110" ry="50" fill="#666666" opacity="0.9"/><ellipse cx="355" cy="291" rx="75" ry="20" fill="#666666" opacity="0.9"/><ellipse cx="40" cy="90" rx="45" ry="24" fill="#707070" opacity="0.8"/><ellipse cx="112" cy="68" rx="34" ry="26" fill="#707070" opacity="0.8"/><ellipse cx="158" cy="160" rx="30" ry="14" fill="#6b6b6b" opacity="0.8"/><ellipse cx="243" cy="87" rx="50" ry="26" fill="#707070" opacity="0.8"/><ellipse cx="90" cy="135" rx="60" ry="16" fill="#707070" opacity="0.8"/><ellipse cx="185" cy="220" rx="70" ry="16" fill="#707070" opacity="0.8"/><ellipse cx="312" cy="28" rx="75" ry="22" fill="#757575" opacity="0.8"/><ellipse cx="455" cy="18" rx="60" ry="18" fill="#757575" opacity="0.8"/><ellipse cx="522" cy="66" rx="50" ry="22" fill="#757575" opacity="0.8"/><ellipse cx="30" cy="185" rx="50" ry="22" fill="#757575" opacity="0.7"/><ellipse cx="860" cy="298" rx="135" ry="46" fill="#7d7d7d" opacity="0.95"/><ellipse cx="820" cy="290" rx="45" ry="25" fill="#707070" opacity="0.6"/><ellipse cx="688" cy="327" rx="60" ry="22" fill="#858585" opacity="0.8"/><ellipse cx="520" cy="300" rx="70" ry="22" fill="#828282" opacity="0.7"/><ellipse cx="600" cy="235" rx="60" ry="18" fill="#808080" opacity="0.7"/><ellipse cx="400" cy="180" rx="70" ry="16" fill="#7d7d7d" opacity="0.7"/><ellipse cx="460" cy="120" rx="55" ry="16" fill="#7d7d7d" opacity="0.7"/><ellipse cx="620" cy="150" rx="50" ry="18" fill="#808080" opacity="0.7"/><ellipse cx="300" cy="130" rx="50" ry="14" fill="#7d7d7d" opacity="0.6"/><ellipse cx="140" cy="30" rx="60" ry="14" fill="#808080" opacity="0.6"/><ellipse cx="700" cy="30" rx="40" ry="12" fill="#858585" opacity="0.6"/><ellipse cx="890" cy="60" rx="25" ry="12" fill="#858585" opacity="0.7"/><ellipse cx="640" cy="200" rx="50" ry="14" fill="#828282" opacity="0.6"/><ellipse cx="260" cy="250" rx="60" ry="14" fill="#7a7a7a" opacity="0.6"/><ellipse cx="120" cy="350" rx="60" ry="12" fill="#8a8a8a" opacity="0.6"/><ellipse cx="450" cy="245" rx="60" ry="14" fill="#828282" opacity="0.6"/></g></g><g mask="url(#skmask)"><g filter="url(#skf2)"><linearGradient id="skb2" x1="0" y1="0" x2="0" y2="1"><stop offset="0" stop-color="#9e9e9e"/><stop offset="0.7" stop-color="#ababab"/><stop offset="0.8" stop-color="#bbbbbb"/><stop offset="0.9" stop-color="#d0d0d0"/><stop offset="1" stop-color="#e0e0e0"/></linearGradient><rect width="976" height="481" fill="url(#skb2)"/><g filter="url(#skbl)"><ellipse cx="120" cy="400" rx="160" ry="40" fill="#9e9e9e" opacity="0.8"/><ellipse cx="620" cy="440" rx="330" ry="30" fill="#dbdbdb" opacity="0.7"/><ellipse cx="850" cy="380" rx="130" ry="20" fill="#cccccc" opacity="0.6"/><ellipse cx="300" cy="455" rx="200" ry="18" fill="#d6d6d6" opacity="0.6"/><ellipse cx="870" cy="330" rx="100" ry="25" fill="#999999" opacity="0.7"/><ellipse cx="60" cy="470" rx="80" ry="10" fill="#e0e0e0" opacity="0.7"/></g></g></g></svg><div style="position:absolute;left:0;top:70px;width:976px;height:1.5px;background:linear-gradient(90deg,#b09a90,#6f8088 45%,#b99 60%,#d9a0a0)"></div></div>
<!-- p_right -->
<svg width="0" height="0" style="position:absolute"><defs><filter id="tmA" x="0" y="0" width="100%" height="100%" color-interpolation-filters="sRGB"><feTurbulence type="fractalNoise" baseFrequency="0.11 0.24" numOctaves="3" seed="3" result="n"/><feColorMatrix in="n" type="matrix" values="1 0 0 0 0 1 0 0 0 0 1 0 0 0 0 0 0 0 0 1" result="ng"/><feComposite in="SourceGraphic" in2="ng" operator="arithmetic" k1="0" k2="1" k3="0.7" k4="-0.35"/><feComponentTransfer><feFuncR type="table" tableValues="0.463 0.469 0.475 0.481 0.488 0.494 0.500 0.506 0.559 0.681 0.804 0.843 0.851 0.858 0.892 0.926 0.961 0.980 1.000 1.000 1.000"/><feFuncG type="table" tableValues="0.533 0.533 0.533 0.533 0.533 0.533 0.533 0.533 0.535 0.538 0.541 0.541 0.584 0.636 0.680 0.725 0.769 0.804 0.839 0.910 0.980"/><feFuncB type="table" tableValues="0.510 0.507 0.504 0.501 0.497 0.494 0.491 0.488 0.465 0.413 0.361 0.354 0.512 0.659 0.601 0.544 0.486 0.467 0.447 0.576 0.706"/></feComponentTransfer></filter><filter id="tmB" x="0" y="0" width="100%" height="100%" color-interpolation-filters="sRGB"><feTurbulence type="fractalNoise" baseFrequency="0.11 0.24" numOctaves="3" seed="8" result="n"/><feColorMatrix in="n" type="matrix" values="1 0 0 0 0 1 0 0 0 0 1 0 0 0 0 0 0 0 0 1" result="ng"/><feComposite in="SourceGraphic" in2="ng" operator="arithmetic" k1="0" k2="1" k3="0.7" k4="-0.35"/><feComponentTransfer><feFuncR type="table" tableValues="0.275 0.303 0.331 0.359 0.387 0.415 0.450 0.496 0.542 0.588 0.717 0.845 0.902 0.941 0.971 0.985 1.000 1.000 1.000 1.000 1.000"/><feFuncG type="table" tableValues="0.314 0.336 0.359 0.381 0.403 0.426 0.441 0.446 0.450 0.455 0.462 0.469 0.497 0.529 0.579 0.654 0.729 0.805 0.880 0.936 0.980"/><feFuncB type="table" tableValues="0.667 0.691 0.716 0.740 0.765 0.789 0.800 0.789 0.779 0.769 0.704 0.640 0.575 0.510 0.460 0.434 0.408 0.467 0.525 0.623 0.745"/></feComponentTransfer></filter><linearGradient id="tgA" x1="0" y1="0" x2="0" y2="1"><stop offset="0" stop-color="#8a8a8a"/><stop offset="0.6" stop-color="#969696"/><stop offset="0.8" stop-color="#c0c0c0"/><stop offset="1" stop-color="#e6e6e6"/></linearGradient><linearGradient id="tgB" x1="0" y1="0" x2="0" y2="1"><stop offset="0" stop-color="#4c4c4c"/><stop offset="0.45" stop-color="#787878"/><stop offset="0.7" stop-color="#aaaaaa"/><stop offset="0.88" stop-color="#d8d8d8"/><stop offset="1" stop-color="#f0f0f0"/></linearGradient></defs></svg>
<div style="position:absolute;left:1394px;top:96.5px;width:1.8px;height:23.5px;background:#7c7c7c;"></div>
<div style="position:absolute;left:1398.2px;top:96.5px;width:1.8px;height:23.5px;background:#7c7c7c;"></div>
<div style="position:absolute;left:1402.4px;top:96.5px;width:1.8px;height:23.5px;background:#7c7c7c;"></div>
<svg style="position:absolute;left:1730px;top:98px;" width="24" height="20" viewBox="0 0 24 20" fill="none" stroke-linecap="round" stroke-linejoin="round"><path d="M2.5 2.5 L10.0 10 L2.5 17.5 " stroke="#8c8c8c" stroke-width="2" stroke-linecap="butt" stroke-linejoin="miter"/></svg>
<svg style="position:absolute;left:1783px;top:98px;" width="34" height="20" viewBox="0 0 34 20" fill="none" stroke-linecap="round" stroke-linejoin="round"><path d="M2.5 2.5 L10.0 10 L2.5 17.5 M12.0 2.5 L19.5 10 L12.0 17.5 " stroke="#8c8c8c" stroke-width="2" stroke-linecap="butt" stroke-linejoin="miter"/></svg>
<div style="position:absolute;left:1816px;top:96.5px;width:1.8px;height:23.5px;background:#7c7c7c;"></div>
<div style="position:absolute;left:1820.2px;top:96.5px;width:1.8px;height:23.5px;background:#7c7c7c;"></div>
<div style="position:absolute;left:1824.4px;top:96.5px;width:1.8px;height:23.5px;background:#7c7c7c;"></div>
<svg style="position:absolute;left:2081px;top:98px;" width="24" height="20" viewBox="0 0 24 20" fill="none" stroke-linecap="round" stroke-linejoin="round"><path d="M2.5 2.5 L10.0 10 L2.5 17.5 " stroke="#8c8c8c" stroke-width="2" stroke-linecap="butt" stroke-linejoin="miter"/></svg>
<svg style="position:absolute;left:2135px;top:98px;" width="34" height="20" viewBox="0 0 34 20" fill="none" stroke-linecap="round" stroke-linejoin="round"><path d="M2.5 2.5 L10.0 10 L2.5 17.5 M12.0 2.5 L19.5 10 L12.0 17.5 " stroke="#8c8c8c" stroke-width="2" stroke-linecap="butt" stroke-linejoin="miter"/></svg>
<div style="position:absolute;left:1388px;top:129px;width:332px;height:43px;background:#333333;"></div>
<div style="position:absolute;left:1404px;top:146px;width:14.3px;height:2px;background:#858585;"></div>
<div style="position:absolute;left:1404px;top:152.5px;width:14.3px;height:2px;background:#858585;"></div>
<div style="position:absolute;left:1404px;top:159px;width:14.3px;height:2px;background:#858585;"></div>
<div style="position:absolute;left:1432px;top:144px;width:48px;height:26.5px;background:#4b4b4b;"></div>
<div style="position:absolute;left:1482px;top:144px;width:42px;height:26.5px;background:#4b4b4b;"></div>
<div style="position:absolute;left:1584px;top:144px;width:42px;height:26.5px;background:#4b4b4b;"></div>
<div style="position:absolute;left:1628px;top:144px;width:42px;height:26.5px;background:#4b4b4b;"></div>
<div style="position:absolute;left:1526px;top:144px;width:56px;height:30px;background:#4d4d4d;"></div>
<div style="position:absolute;left:1388px;top:171.5px;width:332px;height:10.5px;background:#4d4d4d;"></div>
<svg style="position:absolute;left:1432px;top:146px;overflow:hidden;" width="48" height="26" viewBox="0 0 48 26" fill="none" stroke-linecap="round" stroke-linejoin="round"><path d="M2 26 V8 a3 3 0 0 1 3 -3 H13 l4 4 H32 a3.5 3.5 0 0 1 3.500 3.500 V26 Z" fill="#6a6a6a"/><path d="M8 26 V16 a3 3 0 0 1 3 -3 H24 a3 3 0 0 1 3 3 V26 M12 26 V20 a3 3 0 0 1 3 -3 H20 a3 3 0 0 1 3 3 V26" stroke="#9a9a9a" stroke-width="1.6"/></svg>
<svg style="position:absolute;left:1488px;top:143px;" width="30" height="28" viewBox="0 0 30 28" fill="none" stroke-linecap="round" stroke-linejoin="round"><path d="M4 3 C11 3 14 9 15 12 C16 9 19 3 26 3 C26 9 20 13 17.500 14.500 C20 16 26 20 26 26 C19 26 16 20 15 17 C14 20 11 26 4 26 C4 20 10 16 12.500 14.500 C10 13 4 9 4 3 Z" fill="#8a8a8a"/></svg>
<svg style="position:absolute;left:1634px;top:143px;" width="30" height="28" viewBox="0 0 30 28" fill="none" stroke-linecap="round" stroke-linejoin="round"><path d="M4 3 C11 3 14 9 15 12 C16 9 19 3 26 3 C26 9 20 13 17.500 14.500 C20 16 26 20 26 26 C19 26 16 20 15 17 C14 20 11 26 4 26 C4 20 10 16 12.500 14.500 C10 13 4 9 4 3 Z" fill="#8a8a8a"/></svg>
<svg style="position:absolute;left:1539px;top:149px;" width="32" height="30" viewBox="0 0 32 30" fill="none" stroke-linecap="round" stroke-linejoin="round"><circle cx="13.500" cy="14" r="11.300" stroke="#c0c0c0" stroke-width="2.6"/><path d="M11 11 L27 27" stroke="#c0c0c0" stroke-width="3" stroke-linecap="butt"/><path d="M9 9 H17 L9 17 Z" fill="#c0c0c0"/></svg>
<svg style="position:absolute;left:1595px;top:145px;" width="22" height="22" viewBox="0 0 22 22" fill="none" stroke-linecap="round" stroke-linejoin="round"><rect x="1.500" y="1.500" width="18" height="18" rx="3" stroke="#8a8a8a" stroke-width="1.800"/><path d="M3 16 L8 10 L11 13 L14 9.500 L18 14 V18 H3 Z" fill="#8a8a8a"/></svg>
<div style="position:absolute;left:1672px;top:134px;width:48px;height:36px;background:#666;border:2px solid #a8a8a8;border-radius:4px;"></div>
<svg style="position:absolute;left:1684px;top:145px;" width="24" height="14" viewBox="0 0 24 14" fill="none" stroke-linecap="round" stroke-linejoin="round"><path d="M2 2 L12 12 L22 2" stroke="#d4d4d4" stroke-width="2.400" stroke-linecap="butt" stroke-linejoin="miter"/></svg>
<div style="position:absolute;left:1720px;top:129px;width:5px;height:53px;background:#424242;"></div>
<div style="position:absolute;left:1726px;top:133px;width:76px;height:49px;background:#3c3c3c;border:2px solid #4a4a4a;border-bottom:0;"></div>
<div style="position:absolute;left:1728px;top:143px;width:65px;height:39px;background:linear-gradient(180deg,#474747,#545454);border-radius:0 6px 0 0;"></div>
<svg style="position:absolute;left:1744px;top:150px;overflow:hidden;" width="42" height="34" viewBox="0 0 42 34" fill="none" stroke-linecap="round" stroke-linejoin="round"><path d="M3 34 V9 a3 3 0 0 1 3 -3 H16 l4 4 H34 a3.500 3.500 0 0 1 3.500 3.500 V34" stroke="#8e8e8e" stroke-width="2.400"/><path d="M20.500 15 L23.500 23 L32 23.500 L25.500 28.500 L28 37 L20.500 32 L13 37 L15.500 28.500 L9 23.500 L17.500 23 Z" fill="#8e8e8e"/></svg>
<div style="position:absolute;left:1809px;top:129px;width:351px;height:43px;background:#333333;"></div>
<div style="position:absolute;left:1826px;top:146px;width:14.3px;height:2px;background:#858585;"></div>
<div style="position:absolute;left:1826px;top:152.5px;width:14.3px;height:2px;background:#858585;"></div>
<div style="position:absolute;left:1826px;top:159px;width:14.3px;height:2px;background:#858585;"></div>
<div style="position:absolute;left:1856px;top:144px;width:58px;height:26.5px;background:#4b4b4b;"></div>
<div style="position:absolute;left:1916px;top:144px;width:59px;height:26.5px;background:#4b4b4b;"></div>
<div style="position:absolute;left:2038px;top:144px;width:58px;height:26.5px;background:#4b4b4b;"></div>
<div style="position:absolute;left:2098px;top:144px;width:58px;height:26.5px;background:#4b4b4b;"></div>
<div style="position:absolute;left:1976px;top:144px;width:60px;height:30px;background:#4d4d4d;"></div>
<div style="position:absolute;left:1809px;top:171.5px;width:351px;height:10.5px;background:#4d4d4d;"></div>
<svg style="position:absolute;left:1868px;top:149px;overflow:hidden;" width="34" height="22" viewBox="0 0 34 22" fill="none" stroke-linecap="round" stroke-linejoin="round"><circle cx="16" cy="16" r="13" stroke="#8a8a8a" stroke-width="2"/><rect x="9.500" y="9.500" width="13" height="13" rx="3" fill="#8a8a8a"/></svg>
<svg style="position:absolute;left:1928px;top:151px;overflow:hidden;" width="34" height="20" viewBox="0 0 34 20" fill="none" stroke-linecap="round" stroke-linejoin="round"><path d="M4 20 V8 a3 3 0 0 1 3 -3 H9" stroke="#8a8a8a" stroke-width="2"/><rect x="9" y="2" width="19" height="22" rx="3" fill="#686868" stroke="#8a8a8a" stroke-width="2"/></svg>
<svg style="position:absolute;left:1987px;top:147px;" width="34" height="34" viewBox="0 0 34 34" fill="none" stroke-linecap="round" stroke-linejoin="round"><rect x="4" y="13" width="26" height="19" rx="2" stroke="#c0c0c0" stroke-width="2.200"/><path d="M3 9.500 L29.500 3 L30.500 6.500 L4 13 Z" fill="#c0c0c0"/><path d="M4 14 H30 V18 H4 Z" fill="#c0c0c0"/><path d="M9 13.500 L12 18.500 M15 13.500 L18 18.500 M21 13.500 L24 18.500 M27 13.500 L30 18.500" stroke="#4d4d4d" stroke-width="1.800"/><path d="M14 21 L22 25.500 L14 30 Z" fill="#c0c0c0"/></svg>
<svg style="position:absolute;left:2053px;top:150px;overflow:hidden;" width="30" height="21" viewBox="0 0 30 21" fill="none" stroke-linecap="round" stroke-linejoin="round"><rect x="1.500" y="1.500" width="26" height="24" rx="4" stroke="#8a8a8a" stroke-width="2"/><path d="M10 2 V26 M19 2 V26 M2 11 H28" stroke="#8a8a8a" stroke-width="1.600"/><rect x="10" y="2" width="9" height="9" fill="#7a7a7a"/><rect x="19" y="11" width="8" height="10" fill="#6a6a6a"/><rect x="12" y="14" width="5" height="5" stroke="#8a8a8a" stroke-width="1.400"/></svg>
<svg style="position:absolute;left:2112px;top:150px;overflow:hidden" width="32" height="21" viewBox="0 0 32 21"><defs><linearGradient id="hg" x1="0" y1="0" x2="0" y2="1"><stop offset="0" stop-color="#8a8a8a"/><stop offset="1" stop-color="#565656"/></linearGradient></defs><path d="M1 24 C2 14 6 8 9.500 1 L16 11 L22.500 1 C26 8 30 14 31 24 Z" fill="url(#hg)"/></svg>
<div style="position:absolute;left:1390px;top:1132px;width:316px;height:483px;background:#4e4e4e;"></div>
<div style="position:absolute;left:1390px;top:1132px;width:316px;height:14px;background:linear-gradient(180deg,rgba(0,0,0,.30),rgba(0,0,0,0));"></div>
<div style="position:absolute;left:1706px;top:1132px;width:11px;height:483px;background:#484848;"></div>
<div style="position:absolute;left:1708.5px;top:1132px;width:6.5px;height:288px;background:#5c5c5c;border-radius:0 0 4px 4px;"></div>
<div style="position:absolute;left:1717px;top:1132px;width:4.5px;height:488px;background:#3c3c3c;"></div>
<div style="position:absolute;left:1721.5px;top:1132px;width:4px;height:488px;background:#4a4a4a;"></div>
<span style="position:absolute;top:1147.30px;font-size:22.5px;line-height:27.00px;color:#8e8e8e;white-space:pre;left:1440.00px;transform-origin:0 50%;transform:scaleX(0.9397);">New binarization layer</span>
<span style="position:absolute;top:1227.30px;font-size:22.5px;line-height:27.00px;color:#8e8e8e;white-space:pre;left:1440.00px;transform-origin:0 50%;transform:scaleX(0.9406);">Merge selected layers</span>
<span style="position:absolute;top:1306.80px;font-size:22.5px;line-height:27.00px;color:#8e8e8e;white-space:pre;left:1440.00px;transform-origin:0 50%;transform:scaleX(0.9391);">Gradient map</span>
<span style="position:absolute;top:1386.80px;font-size:22.5px;line-height:27.00px;color:#8e8e8e;white-space:pre;left:1440.00px;transform-origin:0 50%;transform:scaleX(0.9591);">Brightness/Contrast</span>
<span style="position:absolute;top:1452.30px;font-size:22.5px;line-height:27.00px;color:#8e8e8e;white-space:pre;left:1440.00px;transform-origin:0 50%;transform:scaleX(0.9498);">Hue/Saturation/Luminosi</span>
<span style="position:absolute;top:1546.30px;font-size:22.5px;line-height:27.00px;color:#8e8e8e;white-space:pre;left:1440.00px;transform-origin:0 50%;transform:scaleX(0.9380);">Posterization</span>
<span style="position:absolute;top:1480.30px;font-size:22.5px;line-height:27.00px;color:#8e8e8e;white-space:pre;left:1440.00px;transform-origin:0 50%;transform:scaleX(1.0020);">ty</span>
<svg style="position:absolute;left:1396px;top:1144px;" width="36" height="36" viewBox="0 0 36 36" fill="none" stroke-linecap="round" stroke-linejoin="round"><rect x="1.200" y="1.200" width="29.600" height="29.600" rx="3.500" stroke="#707070" stroke-width="1.800" fill="#5a5a5a"/><path d="M3 29 V22 H10 V15 H17 V8 H24 V3 H29 V29 Z" fill="#4e4e4e"/></svg>
<svg style="position:absolute;left:1395px;top:1222px;" width="38" height="40" viewBox="0 0 38 40" fill="none" stroke-linecap="round" stroke-linejoin="round"><path d="M17 2 L31 9.500 L17 17 L3 9.500 Z M3 15.500 L17 23 L31 15.500 M3 21.500 L17 29 L31 21.500" stroke="#707070" stroke-width="1.800"/><path d="M36 27 V37 H26 Z" fill="#707070"/></svg>
<svg style="position:absolute;left:1396px;top:1304px" width="36" height="36" viewBox="0 0 36 36"><defs><linearGradient id="gq" x1="0" y1="0" x2="0" y2="1"><stop offset="0" stop-color="#6a6a6a"/><stop offset="1" stop-color="#525252"/></linearGradient></defs><path d="M1.200 30 V4.500 a3.300 3.300 0 0 1 3.300 -3.300 H27.500 a3.300 3.300 0 0 1 3.300 3.300 V30" fill="url(#gq)" stroke="#707070" stroke-width="1.800"/><path d="M1.200 24 H30.800" stroke="#707070" stroke-width="1.600"/><path d="M5 26 L8.500 31 H1.500 Z M27 26 L30.500 31 H23.500 Z" fill="#707070"/><path d="M11 30.500 H21" stroke="#707070" stroke-width="1.600"/></svg>
<svg style="position:absolute;left:1396px;top:1384px;" width="36" height="36" viewBox="0 0 36 36" fill="none" stroke-linecap="round" stroke-linejoin="round"><rect x="1.200" y="1.200" width="29.600" height="29.600" rx="3.500" stroke="#707070" stroke-width="1.800" fill="#5a5a5a"/><circle cx="16" cy="16" r="8.500" stroke="#707070" stroke-width="1.800" fill="#4e4e4e"/><path d="M10 22 A8.500 8.500 0 0 0 22 10 Z" fill="#707070"/><path d="M27.5 16.0 L30.0 16.0 M24.1 24.1 L25.9 25.9 M16.0 27.5 L16.0 30.0 M7.9 24.1 L6.1 25.9 M4.5 16.0 L2.0 16.0 M7.9 7.9 L6.1 6.1 M16.0 4.5 L16.0 2.0 M24.1 7.9 L25.9 6.1 " stroke="#707070" stroke-width="1.600"/></svg>
<svg style="position:absolute;left:1396px;top:1463.5px;" width="36" height="36" viewBox="0 0 36 36" fill="none" stroke-linecap="round" stroke-linejoin="round"><rect x="1.200" y="1.200" width="29.600" height="29.600" rx="3.500" stroke="#707070" stroke-width="1.800" fill="#5a5a5a"/><path d="M2 11 H30 M2 21 H30" stroke="#707070" stroke-width="1.600"/><path d="M16 5 L19.500 10 H12.500 Z M16 14 L19.500 19 H12.500 Z M16 23.500 L20 29.500 H12 Z" fill="#707070"/></svg>
<svg style="position:absolute;left:1396px;top:1543.5px;" width="36" height="36" viewBox="0 0 36 36" fill="none" stroke-linecap="round" stroke-linejoin="round"><rect x="1.200" y="1.200" width="29.600" height="29.600" rx="3.500" stroke="#707070" stroke-width="1.800" fill="#5a5a5a"/><rect x="11.500" y="2" width="9.500" height="28" fill="#545454"/><rect x="21" y="2" width="9" height="28" fill="#4e4e4e"/><path d="M2 16 H30" stroke="#626262" stroke-width="1.400"/></svg>
<div style="position:absolute;left:1810px;top:1132px;width:350px;height:488px;background:#3f3f3f;"></div>
<div style="position:absolute;left:1810px;top:1132px;width:334px;height:30px;background:#474747;"></div>
<div style="position:absolute;left:1810px;top:1132px;width:350px;height:12px;background:linear-gradient(180deg,rgba(0,0,0,.28),rgba(0,0,0,0));"></div>
<svg style="position:absolute;left:1834px;top:1132px;overflow:hidden;" width="40" height="23" viewBox="0 0 40 23" fill="none" stroke-linecap="round" stroke-linejoin="round"><g transform="translate(0,5)"><path d="M2 -6 V7.500 H16" stroke="#8a8a8a" stroke-width="2"/><circle cx="27" cy="8" r="6.500" fill="#8a8a8a"/><path d="M27 4.500 V11.500 M23.500 8 H30.500" stroke="#474747" stroke-width="1.600"/></g></svg>
<svg style="position:absolute;left:1888px;top:1132px;overflow:hidden;" width="40" height="23" viewBox="0 0 40 23" fill="none" stroke-linecap="round" stroke-linejoin="round"><g transform="translate(0,5)"><path d="M2 -4 H26 V2 a5 5 0 0 1 -5 5 H7 a5 5 0 0 1 -5 -5 Z" fill="#8a8a8a"/><circle cx="29" cy="9" r="6.500" fill="#8a8a8a" stroke="#474747" stroke-width="1.200"/><path d="M29 5.500 V12.500 M25.500 9 H32.500" stroke="#474747" stroke-width="1.600"/></g></svg>
<svg style="position:absolute;left:1944px;top:1132px;overflow:hidden;" width="40" height="23" viewBox="0 0 40 23" fill="none" stroke-linecap="round" stroke-linejoin="round"><g transform="translate(0,5)"><path d="M3 -6 V7 a3 3 0 0 0 3 3 H17 a3 3 0 0 0 3 -3 V-2" stroke="#8a8a8a" stroke-width="2"/><path d="M8 6 L13 1 M8 1.500 V6 H12.500" stroke="#8a8a8a" stroke-width="1.800"/><path d="M22 -1 c2 3 6 3 6 -2 M30 3 l5 -1.500" stroke="#8a8a8a" stroke-width="1.800"/></g></svg>
<svg style="position:absolute;left:2000px;top:1132px;overflow:hidden;" width="40" height="23" viewBox="0 0 40 23" fill="none" stroke-linecap="round" stroke-linejoin="round"><g transform="translate(0,5)"><path d="M3 -6 V7 a3 3 0 0 0 3 3 H17 a3 3 0 0 0 3 -3 V-2" stroke="#8a8a8a" stroke-width="2"/><path d="M8 6 L14 0 M8 1.500 V6 H12.500" stroke="#8a8a8a" stroke-width="1.800"/><path d="M22 2 H31 a3 3 0 0 0 3 -3" stroke="#8a8a8a" stroke-width="1.800"/></g></svg>
<svg style="position:absolute;left:2058px;top:1132px;overflow:hidden;" width="32" height="21" viewBox="0 0 32 21" fill="none" stroke-linecap="round" stroke-linejoin="round"><g transform="translate(0,5)"><path d="M2 -4 H29 V7 a4 4 0 0 1 -4 4 H6 a4 4 0 0 1 -4 -4 Z" fill="#8a8a8a"/><path d="M9 -2 A6.500 6.500 0 0 0 22 -2 Z" fill="#474747"/></g></svg>
<svg style="position:absolute;left:2116px;top:1132px;overflow:hidden;" width="28" height="21" viewBox="0 0 28 21" fill="none" stroke-linecap="round" stroke-linejoin="round"><g transform="translate(0,5)"><path d="M3.500 -6 L5 6.500 a3 3 0 0 0 3 2.500 H18 a3 3 0 0 0 3 -2.500 L22.500 -6 M9 -4 V5 M13 -4 V5 M17 -4 V5" stroke="#8a8a8a" stroke-width="1.800"/></g></svg>
<div style="position:absolute;left:1812px;top:1162px;width:332px;height:2px;background:#2a2a2a;"></div>
<div style="position:absolute;left:1908px;top:1164px;width:236px;height:64px;background:#5c6a8a;"></div>
<div style="position:absolute;left:1812px;top:1228px;width:332px;height:2px;background:#2a2a2a;"></div>
<svg style="position:absolute;left:1818px;top:1185.0px;" width="32" height="20" viewBox="0 0 32 20" fill="none" stroke-linecap="round" stroke-linejoin="round"><path d="M2 11.500 C8 1.500 24 1.500 30 11.500" stroke="#b8b8b8" stroke-width="2.4"/><circle cx="16" cy="10.500" r="6" fill="#b8b8b8"/></svg>
<svg style="position:absolute;left:1864px;top:1181.0px;" width="32" height="30" viewBox="0 0 32 30" fill="none" stroke-linecap="round" stroke-linejoin="round"><path d="M24 2 L28.500 6.500 L11 24 L6.500 19.500 Z" fill="#c4c4c4"/><path d="M5.300 21 L9.500 25.200 L3 27.500 Z" fill="#c4c4c4"/><path d="M3 29 H29" stroke="#c4c4c4" stroke-width="1.800"/></svg>
<div style="position:absolute;left:1916px;top:1167px;width:76px;height:59px;border:1.500px solid #e8e8e8;"></div>
<div style="position:absolute;left:1921px;top:1171px;width:66px;height:50px;border:2px solid #2a2a2a;overflow:hidden;background:repeating-conic-gradient(#cfcfcf 0% 25%,#ffffff 0% 50%) 0 0/14px 14px;"><svg style="position:absolute;left:0;top:6px" width="62" height="28"><rect width="62" height="28" fill="url(#tgA)" filter="url(#tmA)"/></svg></div>
<span style="position:absolute;top:1169.80px;font-size:22.5px;line-height:27.00px;color:#e2e4ea;white-space:pre;left:2004.50px;transform-origin:0 50%;transform:scaleX(0.9092);">100 %</span>
<div style="position:absolute;left:2074px;top:1172px;width:24px;height:26px;overflow:hidden;-webkit-mask-image:linear-gradient(90deg,#000 55%,transparent 100%);mask-image:linear-gradient(90deg,#000 55%,transparent 100%);"><span style="position:absolute;top:-2.20px;font-size:22.5px;line-height:27.00px;color:#c4c8d4;white-space:pre;left:0.00px;transform-origin:0 50%;transform:scaleX(0.7585);">Nor</span></div>
<div style="position:absolute;left:2004.5px;top:1198px;width:92px;height:28px;overflow:hidden;-webkit-mask-image:linear-gradient(90deg,#000 85%,transparent 100%);mask-image:linear-gradient(90deg,#000 85%,transparent 100%);"><span style="position:absolute;top:-1.20px;font-size:22.5px;line-height:27.00px;color:#e2e4ea;white-space:pre;left:0.00px;transform-origin:0 50%;transform:scaleX(0.7079);">Photo 1 Copy</span></div>
<div style="position:absolute;left:2118px;top:1188.5px;width:14px;height:2px;background:#262a36;"></div>
<div style="position:absolute;left:2118px;top:1195.0px;width:14px;height:2px;background:#262a36;"></div>
<div style="position:absolute;left:2118px;top:1201.5px;width:14px;height:2px;background:#262a36;"></div>
<div style="position:absolute;left:1812px;top:1294px;width:332px;height:2px;background:#2a2a2a;"></div>
<svg style="position:absolute;left:1818px;top:1251.0px;" width="32" height="20" viewBox="0 0 32 20" fill="none" stroke-linecap="round" stroke-linejoin="round"><path d="M2 11.500 C8 1.500 24 1.500 30 11.500" stroke="#b8b8b8" stroke-width="2.4"/><circle cx="16" cy="10.500" r="6" fill="#b8b8b8"/></svg>
<div style="position:absolute;left:1875.5px;top:1252.5px;width:19px;height:19px;border:2px solid #2e2e2e;border-radius:5px;"></div>
<div style="position:absolute;left:1921px;top:1237px;width:66px;height:50px;border:2px solid #2a2a2a;overflow:hidden;background:repeating-conic-gradient(#cfcfcf 0% 25%,#ffffff 0% 50%) 0 0/14px 14px;"><svg style="position:absolute;left:0;top:5px" width="62" height="28"><rect width="62" height="28" fill="url(#tgB)" filter="url(#tmB)"/></svg></div>
<span style="position:absolute;top:1235.80px;font-size:22.5px;line-height:27.00px;color:#dadada;white-space:pre;left:2004.50px;transform-origin:0 50%;transform:scaleX(0.9092);">100 %</span>
<div style="position:absolute;left:2074px;top:1238px;width:24px;height:26px;overflow:hidden;-webkit-mask-image:linear-gradient(90deg,#000 55%,transparent 100%);mask-image:linear-gradient(90deg,#000 55%,transparent 100%);"><span style="position:absolute;top:-2.20px;font-size:22.5px;line-height:27.00px;color:#b8b8b8;white-space:pre;left:0.00px;transform-origin:0 50%;transform:scaleX(0.7585);">Nor</span></div>
<div style="position:absolute;left:2004.5px;top:1264px;width:92px;height:28px;overflow:hidden;-webkit-mask-image:linear-gradient(90deg,#000 85%,transparent 100%);mask-image:linear-gradient(90deg,#000 85%,transparent 100%);"><span style="position:absolute;top:-1.20px;font-size:22.5px;line-height:27.00px;color:#dadada;white-space:pre;left:0.00px;transform-origin:0 50%;transform:scaleX(0.7079);">Photo 1 Copy</span></div>
<div style="position:absolute;left:2118px;top:1254.5px;width:14px;height:2px;background:#2c2c2c;"></div>
<div style="position:absolute;left:2118px;top:1261.0px;width:14px;height:2px;background:#2c2c2c;"></div>
<div style="position:absolute;left:2118px;top:1267.5px;width:14px;height:2px;background:#2c2c2c;"></div>
<div style="position:absolute;left:1812px;top:1360px;width:332px;height:2px;background:#2a2a2a;"></div>
<div style="position:absolute;left:1825.5px;top:1318.5px;width:19px;height:19px;border:2px solid #2e2e2e;border-radius:5px;"></div>
<div style="position:absolute;left:1875.5px;top:1318.5px;width:19px;height:19px;border:2px solid #2e2e2e;border-radius:5px;"></div>
<div style="position:absolute;left:1921px;top:1303px;width:66px;height:50px;border:2px solid #2a2a2a;overflow:hidden;background:repeating-conic-gradient(#cfcfcf 0% 25%,#ffffff 0% 50%) 0 0/14px 14px;"><svg style="position:absolute;left:0;top:5px" width="62" height="37"><rect width="62" height="29" fill="url(#tgB)" filter="url(#tmB)"/><rect y="29" width="62" height="8" fill="#1c1424"/><path d="M0 29 L0 25 L6 25 L8 23 L14 24 L16 26 L22 25 L24 22 L27 26 L33 26 L36 24 L40 27 L48 26 L52 27 L62 26 L62 29 Z" fill="#2a1830"/><path d="M14 26 L17 21 L20 26 Z" fill="#8a2030"/></svg></div>
<span style="position:absolute;top:1301.80px;font-size:22.5px;line-height:27.00px;color:#dadada;white-space:pre;left:2004.50px;transform-origin:0 50%;transform:scaleX(0.9092);">100 %</span>
<div style="position:absolute;left:2074px;top:1304px;width:24px;height:26px;overflow:hidden;-webkit-mask-image:linear-gradient(90deg,#000 55%,transparent 100%);mask-image:linear-gradient(90deg,#000 55%,transparent 100%);"><span style="position:absolute;top:-2.20px;font-size:22.5px;line-height:27.00px;color:#b8b8b8;white-space:pre;left:0.00px;transform-origin:0 50%;transform:scaleX(0.7585);">Nor</span></div>
<div style="position:absolute;left:2004.5px;top:1330px;width:92px;height:28px;overflow:hidden;-webkit-mask-image:linear-gradient(90deg,#000 85%,transparent 100%);mask-image:linear-gradient(90deg,#000 85%,transparent 100%);"><span style="position:absolute;top:-1.20px;font-size:22.5px;line-height:27.00px;color:#dadada;white-space:pre;left:0.00px;transform-origin:0 50%;transform:scaleX(0.9026);">Photo 1</span></div>
<div style="position:absolute;left:2118px;top:1320.5px;width:14px;height:2px;background:#2c2c2c;"></div>
<div style="position:absolute;left:2118px;top:1327.0px;width:14px;height:2px;background:#2c2c2c;"></div>
<div style="position:absolute;left:2118px;top:1333.5px;width:14px;height:2px;background:#2c2c2c;"></div>
<div style="position:absolute;left:1812px;top:1426px;width:332px;height:2px;background:#2a2a2a;"></div>
<svg style="position:absolute;left:1818px;top:1383.0px;" width="32" height="20" viewBox="0 0 32 20" fill="none" stroke-linecap="round" stroke-linejoin="round"><path d="M2 11.500 C8 1.500 24 1.500 30 11.500" stroke="#b8b8b8" stroke-width="2.4"/><circle cx="16" cy="10.500" r="6" fill="#b8b8b8"/></svg>
<div style="position:absolute;left:1875.5px;top:1384.5px;width:19px;height:19px;border:2px solid #2e2e2e;border-radius:5px;"></div>
<div style="position:absolute;left:1921px;top:1369px;width:66px;height:50px;border:2px solid #2a2a2a;background:repeating-conic-gradient(#cfcfcf 0% 25%,#ffffff 0% 50%) 0 0/14px 14px;"></div>
<span style="position:absolute;top:1367.80px;font-size:22.5px;line-height:27.00px;color:#dadada;white-space:pre;left:2004.50px;transform-origin:0 50%;transform:scaleX(0.9092);">100 %</span>
<div style="position:absolute;left:2074px;top:1370px;width:24px;height:26px;overflow:hidden;-webkit-mask-image:linear-gradient(90deg,#000 55%,transparent 100%);mask-image:linear-gradient(90deg,#000 55%,transparent 100%);"><span style="position:absolute;top:-2.20px;font-size:22.5px;line-height:27.00px;color:#b8b8b8;white-space:pre;left:0.00px;transform-origin:0 50%;transform:scaleX(0.7585);">Nor</span></div>
<div style="position:absolute;left:2004.5px;top:1396px;width:92px;height:28px;overflow:hidden;-webkit-mask-image:linear-gradient(90deg,#000 85%,transparent 100%);mask-image:linear-gradient(90deg,#000 85%,transparent 100%);"><span style="position:absolute;top:-1.20px;font-size:22.5px;line-height:27.00px;color:#dadada;white-space:pre;left:0.00px;transform-origin:0 50%;transform:scaleX(0.8795);">Layer 1</span></div>
<div style="position:absolute;left:2118px;top:1386.5px;width:14px;height:2px;background:#2c2c2c;"></div>
<div style="position:absolute;left:2118px;top:1393.0px;width:14px;height:2px;background:#2c2c2c;"></div>
<div style="position:absolute;left:2118px;top:1399.5px;width:14px;height:2px;background:#2c2c2c;"></div>
<div style="position:absolute;left:1812px;top:1492px;width:332px;height:2px;background:#2a2a2a;"></div>
<svg style="position:absolute;left:1818px;top:1449.0px;" width="32" height="20" viewBox="0 0 32 20" fill="none" stroke-linecap="round" stroke-linejoin="round"><path d="M2 11.500 C8 1.500 24 1.500 30 11.500" stroke="#b8b8b8" stroke-width="2.4"/><circle cx="16" cy="10.500" r="6" fill="#b8b8b8"/></svg>
<div style="position:absolute;left:1875.5px;top:1450.5px;width:19px;height:19px;border:2px solid #2e2e2e;border-radius:5px;"></div>
<div style="position:absolute;left:1921px;top:1435px;width:66px;height:50px;background:#fff;border:2px solid #2a2a2a;"></div>
<div style="position:absolute;left:2012.5px;top:1434px;width:35px;height:35px;background:#fff;border:2px solid #2a2a2a;"></div>
<svg style="position:absolute;left:2018px;top:1438px;" width="24" height="28" viewBox="0 0 24 28" fill="none" stroke-linecap="round" stroke-linejoin="round"><path d="M3 3 a2.500 2.500 0 0 1 2.500 -2.500 H19 a2.500 2.500 0 0 1 2.500 2.500 V24 a2.500 2.500 0 0 1 -2.500 2.500 H10 L3 19.500 Z" stroke="#3a3a3a" stroke-width="2"/><path d="M3 19 H8.500 a2 2 0 0 1 2 2 V26.500 Z" fill="#3a3a3a"/></svg>
<span style="position:absolute;top:1461.30px;font-size:22.5px;line-height:27.00px;color:#dadada;white-space:pre;left:2054.50px;transform-origin:0 50%;transform:scaleX(0.6996);">Paper</span>
<div style="position:absolute;left:2118px;top:1452.5px;width:14px;height:2px;background:#2c2c2c;"></div>
<div style="position:absolute;left:2118px;top:1459.0px;width:14px;height:2px;background:#2c2c2c;"></div>
<div style="position:absolute;left:2118px;top:1465.5px;width:14px;height:2px;background:#2c2c2c;"></div>
<div style="position:absolute;left:1860.5px;top:1164px;width:2px;height:328px;background:#2a2a2a;"></div>
<div style="position:absolute;left:1906.5px;top:1164px;width:2px;height:328px;background:#2a2a2a;"></div>
<!-- p_dialog -->
<div style="position:absolute;left:1128px;top:182px;width:1032px;height:950px;background:#383838;box-shadow:-2px 3px 10px rgba(0,0,0,.55);"></div>
<div style="position:absolute;left:1134px;top:230px;width:1020px;height:896px;background:#4e4e4e;"></div>
<span style="position:absolute;top:190.70px;font-size:26px;line-height:31.20px;color:#b6b6b6;white-space:pre;left:1564.73px;transform-origin:50% 50%;transform:scaleX(0.9490);">Gradient map</span>
<svg style="position:absolute;left:1141px;top:195px;" width="22" height="22" viewBox="0 0 22 22" fill="none" stroke-linecap="round" stroke-linejoin="round"><path d="M2.5 2.5 L19.5 19.5 M19.5 2.5 L2.5 19.5" stroke="#c4c4c4" stroke-width="2" stroke-linecap="butt"/></svg>
<div style="position:absolute;left:1162px;top:250px;width:786px;height:62px;border:2px solid #a8a8a8;background:linear-gradient(90deg,#00001c 0%,#0f0632 8%,#2d0f56 20%,#3a2f66 27%,#47557a 32%,#54808a 38%,#8f8a72 46%,#d98956 55.5%,#d9a0ab 64.5%,#ecb98c 76%,#ffd26e 88.5%,#ffffc0 98.7%,#ffffc4 100%);background-origin:border-box;"></div>
<svg style="position:absolute;left:1152px;top:312px;" width="810" height="14" viewBox="0 0 810 14" fill="none" stroke-linecap="round" stroke-linejoin="round"><rect x="11.2" y="0" width="1.6" height="8" fill="#9a9a9a"/><rect x="89.4" y="0" width="1.6" height="8" fill="#9a9a9a"/><rect x="167.6" y="0" width="1.6" height="8" fill="#9a9a9a"/><rect x="245.8" y="0" width="1.6" height="8" fill="#9a9a9a"/><rect x="324.0" y="0" width="1.6" height="8" fill="#9a9a9a"/><rect x="402.2" y="0" width="1.6" height="8" fill="#9a9a9a"/><rect x="480.4" y="0" width="1.6" height="8" fill="#9a9a9a"/><rect x="558.6" y="0" width="1.6" height="8" fill="#9a9a9a"/><rect x="636.8" y="0" width="1.6" height="8" fill="#9a9a9a"/><rect x="715.0" y="0" width="1.6" height="8" fill="#9a9a9a"/><rect x="793.2" y="0" width="1.6" height="8" fill="#9a9a9a"/><path d="M5.5 11.2 L13 3.2 L20.5 11.2" stroke="#a2a2a2" stroke-width="2" fill="none" stroke-linecap="butt" stroke-linejoin="miter"/><path d="M161.5 11.2 L169 3.2 L176.5 11.2" stroke="#a2a2a2" stroke-width="2" fill="none" stroke-linecap="butt" stroke-linejoin="miter"/><path d="M299.5 11.2 L307 3.2 L314.5 11.2" stroke="#ffffff" stroke-width="2.2" fill="none" stroke-linecap="butt" stroke-linejoin="miter"/><path d="M439.20000000000005 11.2 L446.70000000000005 3.2 L454.20000000000005 11.2" stroke="#a2a2a2" stroke-width="2" fill="none" stroke-linecap="butt" stroke-linejoin="miter"/><path d="M509.20000000000005 11.2 L516.7 3.2 L524.2 11.2" stroke="#a2a2a2" stroke-width="2" fill="none" stroke-linecap="butt" stroke-linejoin="miter"/><path d="M697.5 11.2 L705 3.2 L712.5 11.2" stroke="#a2a2a2" stroke-width="2" fill="none" stroke-linecap="butt" stroke-linejoin="miter"/><path d="M777.5 11.2 L785 3.2 L792.5 11.2" stroke="#a2a2a2" stroke-width="2" fill="none" stroke-linecap="butt" stroke-linejoin="miter"/></svg>
<span style="position:absolute;top:350.30px;font-size:22.5px;line-height:27.00px;color:#d6d6d6;white-space:pre;left:1186.00px;transform-origin:0 50%;transform:scaleX(0.9530);">Mixing mode:</span>
<div style="position:absolute;left:1324px;top:340.5px;width:310px;height:49px;background:#676767;border:1.5px solid #8c8c8c;border-radius:5px;"></div><span style="position:absolute;top:352.30px;font-size:22.5px;line-height:27.00px;color:#d6d6d6;white-space:pre;left:1419.35px;transform-origin:50% 50%;transform:scaleX(0.9364);">Standard</span><svg style="position:absolute;left:1604px;top:340.5px" width="30" height="49"><path d="M5.0 17.75 L13.5 9.25 L22.0 17.75" stroke="#cfcfcf" stroke-width="1.8" fill="none" stroke-linecap="butt" stroke-linejoin="miter"/><path d="M5.0 31.25 L13.5 39.75 L22.0 31.25" stroke="#cfcfcf" stroke-width="1.8" fill="none" stroke-linecap="butt" stroke-linejoin="miter"/></svg>
<span style="position:absolute;top:410.30px;font-size:22.5px;line-height:27.00px;color:#d6d6d6;white-space:pre;left:1154.00px;transform-origin:0 50%;transform:scaleX(0.7331);">Brightness correction:</span>
<div style="position:absolute;left:1324px;top:400.5px;width:310px;height:49px;background:#545454;border-radius:5px;"></div><span style="position:absolute;top:412.30px;font-size:22.5px;line-height:27.00px;color:#8c8c8c;white-space:pre;left:1441.86px;transform-origin:50% 50%;transform:scaleX(0.9293);">High</span><svg style="position:absolute;left:1604px;top:400.5px" width="30" height="49"><path d="M5.0 17.75 L13.5 9.25 L22.0 17.75" stroke="#cfcfcf" stroke-width="1.8" fill="none" stroke-linecap="butt" stroke-linejoin="miter"/><path d="M5.0 31.25 L13.5 39.75 L22.0 31.25" stroke="#cfcfcf" stroke-width="1.8" fill="none" stroke-linecap="butt" stroke-linejoin="miter"/></svg>
<svg style="position:absolute;left:1764px;top:346px;" width="26" height="36" viewBox="0 0 26 36" fill="none" stroke-linecap="round" stroke-linejoin="round"><path d="M20 3 L5 18 L20 33" stroke="#c4c4c4" stroke-width="2.4" stroke-linecap="butt" stroke-linejoin="miter"/></svg>
<svg style="position:absolute;left:1816px;top:346px;" width="26" height="36" viewBox="0 0 26 36" fill="none" stroke-linecap="round" stroke-linejoin="round"><path d="M6 3 L21 18 L6 33" stroke="#c4c4c4" stroke-width="2.4" stroke-linecap="butt" stroke-linejoin="miter"/></svg>
<svg style="position:absolute;left:1862px;top:347px" width="32" height="34" viewBox="0 0 32 34"><defs><linearGradient id="fl" x1="0" x2="1"><stop offset="0" stop-color="#555"/><stop offset="1" stop-color="#bbb"/></linearGradient></defs><rect x="3" y="21" width="26" height="9.5" rx="1.5" fill="url(#fl)" stroke="#c4c4c4" stroke-width="2"/><path d="M6 15 A10.5 10.5 0 0 1 26 15" stroke="#c4c4c4" stroke-width="2.2" fill="none"/><path d="M1.5 10.5 L10 12 L5 18.5 Z M30.5 10.5 L22 12 L27 18.5 Z" fill="#c4c4c4"/></svg>
<svg style="position:absolute;left:1915px;top:348px;" width="26" height="31" viewBox="0 0 26 31" fill="none" stroke-linecap="round" stroke-linejoin="round"><path d="M2 6.5 H24 M8.5 6 V3.5 a1.5 1.5 0 0 1 1.5 -1.5 H16 a1.5 1.5 0 0 1 1.5 1.5 V6 M4.5 7 L5.5 26 a3 3 0 0 0 3 2.5 H17.5 a3 3 0 0 0 3 -2.5 L21.500 7 M9.500 11 V24 M13 11 V24 M16.500 11 V24" stroke="#c4c4c4" stroke-width="2" fill="none"/></svg>
<div style="position:absolute;left:1974px;top:250.5px;width:160px;height:49px;background:#666666;border:1.5px solid #8a8a8a;border-radius:5px;"></div>
<span style="position:absolute;top:262.30px;font-size:22.5px;line-height:27.00px;color:#d6d6d6;white-space:pre;left:2037.25px;transform-origin:50% 50%;transform:scaleX(0.9075);">OK</span>
<div style="position:absolute;left:1974px;top:310.5px;width:160px;height:49px;background:#666666;border:1.5px solid #8a8a8a;border-radius:5px;"></div>
<span style="position:absolute;top:322.30px;font-size:22.5px;line-height:27.00px;color:#d6d6d6;white-space:pre;left:2018.48px;transform-origin:50% 50%;transform:scaleX(0.9424);">Cancel</span>
<div style="position:absolute;left:1974px;top:370.5px;width:31px;height:31px;background:#676767;border:1.5px solid #8a8a8a;border-radius:5px;"></div><svg style="position:absolute;left:1974px;top:370.5px;" width="31" height="31" viewBox="0 0 31 31" fill="none" stroke-linecap="round" stroke-linejoin="round"><path d="M7 16.5 L13 24.5 L24.5 7" stroke="#e6e6e6" stroke-width="4.2" stroke-linecap="butt" stroke-linejoin="miter"/></svg>
<span style="position:absolute;top:373.30px;font-size:22.5px;line-height:27.00px;color:#d6d6d6;white-space:pre;left:2015.00px;transform-origin:0 50%;transform:scaleX(0.9060);">Preview</span>
<span style="position:absolute;top:420.30px;font-size:22.5px;line-height:27.00px;color:#d6d6d6;white-space:pre;left:1733.50px;transform-origin:0 50%;transform:scaleX(0.9329);">Position:</span>
<div style="position:absolute;left:1824px;top:410.5px;width:160px;height:49px;background:#676767;border:1.5px solid #8c8c8c;border-radius:5px;"></div>
<span style="position:absolute;top:421.80px;font-size:22.5px;line-height:27.00px;color:#d6d6d6;white-space:pre;left:1835.00px;transform-origin:0 50%;transform:scaleX(1.0020);">38</span>
<svg style="position:absolute;left:2010px;top:424px;" width="16" height="22" viewBox="0 0 16 22" fill="none" stroke-linecap="round" stroke-linejoin="round"><path d="M4 2.5 L12.500 11 L4 19.5" stroke="#cfcfcf" stroke-width="1.8" stroke-linecap="butt" stroke-linejoin="miter"/></svg>
<div style="position:absolute;left:1154px;top:484px;width:480px;height:605px;border:2px solid #747474;"></div>
<div style="position:absolute;left:1168px;top:480px;width:146px;height:10px;background:#4e4e4e;"></div>
<span style="position:absolute;top:471.30px;font-size:22.5px;line-height:27.00px;color:#d6d6d6;white-space:pre;left:1176.00px;transform-origin:0 50%;transform:scaleX(0.9465);">Gradient set</span>
<div style="position:absolute;left:1174px;top:510.5px;width:390px;height:49px;background:#676767;border:1.5px solid #8c8c8c;border-radius:5px;"></div><span style="position:absolute;top:522.30px;font-size:22.5px;line-height:27.00px;color:#d6d6d6;white-space:pre;left:1336.25px;transform-origin:50% 50%;transform:scaleX(0.9198);">Sky</span><svg style="position:absolute;left:1534px;top:510.5px" width="30" height="49"><path d="M5.0 17.75 L13.5 9.25 L22.0 17.75" stroke="#cfcfcf" stroke-width="1.8" fill="none" stroke-linecap="butt" stroke-linejoin="miter"/><path d="M5.0 31.25 L13.5 39.75 L22.0 31.25" stroke="#cfcfcf" stroke-width="1.8" fill="none" stroke-linecap="butt" stroke-linejoin="miter"/></svg>
<svg style="position:absolute;left:1572px;top:518px;" width="32" height="32" viewBox="0 0 32 32" fill="none" stroke-linecap="round" stroke-linejoin="round"><path d="M12.6 3.3 L13.6 8.6 L9.6 11.6 L4.6 9.6 A7.2 7.2 0 0 0 15.3 15.9 L25.6 27.2 A2.5 2.5 0 0 0 29.3 23.8 L18.6 12.6 A7.2 7.2 0 0 0 12.600 3.300 Z" stroke="#c4c4c4" stroke-width="2.1"/></svg>
<div style="position:absolute;left:1174px;top:570px;width:390px;height:439px;background:#2f2f2f;"></div>
<div style="position:absolute;left:1174px;top:570px;width:390px;height:439px;overflow:hidden;"><div style="position:absolute;left:2px;top:2px;width:372px;height:46px;background:#3d3d3d;"></div><div style="position:absolute;left:2px;top:2px;width:297.8px;height:46px;background:linear-gradient(90deg,#061a6e 0%,#032c86 15%,#0357a8 30%,#0274b8 45%,#019cc0 68%,#2ab6cc 80%,#7fe4e6 92%,#a8fcf8 100%);"></div><div style="position:absolute;left:272px;top:12px;width:99px;height:32px;background:rgba(56,56,56,0.52);border-radius:5px 3px 3px 5px;"></div><div style="position:absolute;left:299.8px;top:12px;width:72.20000000000005px;height:32px;background:#3d3d3d;"></div><span style="position:absolute;top:18.10px;font-size:22.5px;line-height:27.00px;color:#dedede;white-space:pre;left:284.47px;transform-origin:100% 50%;transform:scaleX(0.9173);">Blue sky</span><div style="position:absolute;left:2px;top:50px;width:372px;height:46px;background:#3d3d3d;"></div><div style="position:absolute;left:2px;top:50px;width:297.8px;height:46px;background:linear-gradient(90deg,#02245e 0%,#04479a 15%,#0a6cba 30%,#3c9cd2 48%,#78cbe8 62%,#a4eef4 78%,#e6fff0 92%,#ffffff 100%);"></div><div style="position:absolute;left:184px;top:60px;width:187px;height:32px;background:rgba(56,56,56,0.52);border-radius:5px 3px 3px 5px;"></div><div style="position:absolute;left:299.8px;top:60px;width:72.20000000000005px;height:32px;background:#3d3d3d;"></div><span style="position:absolute;top:66.10px;font-size:22.5px;line-height:27.00px;color:#dedede;white-space:pre;left:203.20px;transform-origin:100% 50%;transform:scaleX(0.9423);">Blue Sky (bright)</span><div style="position:absolute;left:2px;top:98px;width:372px;height:46px;background:#3d3d3d;"></div><div style="position:absolute;left:2px;top:98px;width:297.8px;height:46px;background:linear-gradient(90deg,#000018 0%,#02004a 18%,#041258 35%,#02256e 55%,#023e8c 70%,#0a62b4 85%,#3c96e0 96%,#4aa0ea 100%);"></div><div style="position:absolute;left:200px;top:108px;width:171px;height:32px;background:rgba(56,56,56,0.52);border-radius:5px 3px 3px 5px;"></div><div style="position:absolute;left:299.8px;top:108px;width:72.20000000000005px;height:32px;background:#3d3d3d;"></div><span style="position:absolute;top:114.10px;font-size:22.5px;line-height:27.00px;color:#dedede;white-space:pre;left:215.71px;transform-origin:100% 50%;transform:scaleX(0.9298);">Blue Sky (dark)</span><div style="position:absolute;left:2px;top:146px;width:372px;height:46px;background:#3d3d3d;"></div><div style="position:absolute;left:2px;top:146px;width:297.8px;height:46px;background:linear-gradient(90deg,#1878dc 0%,#3896e6 22%,#56bcf4 42%,#70d8fc 56%,#98e8fc 72%,#bef4fc 88%,#e0ffff 100%);"></div><div style="position:absolute;left:242px;top:156px;width:129px;height:32px;background:rgba(56,56,56,0.52);border-radius:5px 3px 3px 5px;"></div><div style="position:absolute;left:299.8px;top:156px;width:72.20000000000005px;height:32px;background:#3d3d3d;"></div><span style="position:absolute;top:162.10px;font-size:22.5px;line-height:27.00px;color:#dedede;white-space:pre;left:256.97px;transform-origin:100% 50%;transform:scaleX(0.9482);">Midday sky</span><div style="position:absolute;left:2px;top:194px;width:372px;height:46px;background:#3d3d3d;"></div><div style="position:absolute;left:2px;top:194px;width:297.8px;height:46px;background:linear-gradient(90deg,#000000 0%,#1a0a0c 10%,#6e2830 26%,#a0302c 36%,#f23c20 50%,#fc5a20 60%,#fe8c24 74%,#fee238 88%,#fefc9a 100%);"></div><div style="position:absolute;left:288px;top:204px;width:83px;height:32px;background:rgba(56,56,56,0.52);border-radius:5px 3px 3px 5px;"></div><div style="position:absolute;left:299.8px;top:204px;width:72.20000000000005px;height:32px;background:#3d3d3d;"></div><span style="position:absolute;top:210.10px;font-size:22.5px;line-height:27.00px;color:#dedede;white-space:pre;left:299.46px;transform-origin:100% 50%;transform:scaleX(0.9237);">Sunset</span><div style="position:absolute;left:2px;top:242px;width:372px;height:46px;background:#3d3d3d;"></div><div style="position:absolute;left:2px;top:242px;width:297.8px;height:46px;background:linear-gradient(90deg,#060000 0%,#2e0400 15%,#5a0a00 30%,#8e1a00 48%,#c82c00 65%,#e43400 80%,#fc5a08 92%,#ff6a10 100%);"></div><div style="position:absolute;left:218px;top:252px;width:153px;height:32px;background:rgba(56,56,56,0.52);border-radius:5px 3px 3px 5px;"></div><div style="position:absolute;left:299.8px;top:252px;width:72.20000000000005px;height:32px;background:#3d3d3d;"></div><span style="position:absolute;top:258.10px;font-size:22.5px;line-height:27.00px;color:#dedede;white-space:pre;left:234.46px;transform-origin:100% 50%;transform:scaleX(0.9404);">Sunset (dark)</span><div style="position:absolute;left:2px;top:290px;width:372px;height:46px;background:#3d3d3d;"></div><div style="position:absolute;left:2px;top:290px;width:297.8px;height:46px;background:linear-gradient(90deg,#6a0008 0%,#a40a06 15%,#d21608 30%,#fa1a04 46%,#fc3418 62%,#fc4c2a 78%,#fe7048 92%,#fe7a50 100%);"></div><div style="position:absolute;left:230px;top:300px;width:141px;height:32px;background:rgba(56,56,56,0.52);border-radius:5px 3px 3px 5px;"></div><div style="position:absolute;left:299.8px;top:300px;width:72.20000000000005px;height:32px;background:#3d3d3d;"></div><span style="position:absolute;top:306.10px;font-size:22.5px;line-height:27.00px;color:#dedede;white-space:pre;left:245.71px;transform-origin:100% 50%;transform:scaleX(0.9330);">Sunset (red)</span><div style="position:absolute;left:2px;top:338px;width:372px;height:46px;background:#3d3d3d;"></div><div style="position:absolute;left:2px;top:338px;width:297.8px;height:46px;background:linear-gradient(90deg,#000000 0%,#200a02 10%,#4c1c00 22%,#9a4a02 36%,#d67a06 50%,#ee9e12 62%,#fed432 76%,#fefe72 88%,#ffffff 97%);"></div><div style="position:absolute;left:220px;top:348px;width:151px;height:32px;background:rgba(56,56,56,0.52);border-radius:5px 3px 3px 5px;"></div><div style="position:absolute;left:299.8px;top:348px;width:72.20000000000005px;height:32px;background:#3d3d3d;"></div><span style="position:absolute;top:354.10px;font-size:22.5px;line-height:27.00px;color:#dedede;white-space:pre;left:235.69px;transform-origin:100% 50%;transform:scaleX(0.9416);">Sunset (gold)</span><div style="position:absolute;left:2px;top:386px;width:372px;height:46px;background:#5c6a8a;"></div><div style="position:absolute;left:2px;top:386px;width:297.8px;height:46px;background:linear-gradient(90deg,#00001c 0%,#200a48 12%,#341458 25%,#6a3068 40%,#a84868 52%,#e06868 64%,#f0a070 76%,#fcd878 90%,#fef4a0 100%);"></div><div style="position:absolute;left:198px;top:396px;width:173px;height:32px;background:rgba(62,62,62,0.50);border-radius:5px 3px 3px 5px;"></div><span style="position:absolute;top:402.10px;font-size:22.5px;line-height:27.00px;color:#dedede;white-space:pre;left:215.68px;transform-origin:100% 50%;transform:scaleX(0.9459);">Sunset (purple)</span><div style="position:absolute;left:2px;top:434px;width:297.8px;height:10px;background:linear-gradient(90deg,#0a0418,#101040 40%,#204a9a 80%,#3c78d0);"></div><div style="position:absolute;left:300.5px;top:434px;width:73.5px;height:10px;background:#3d3d3d;"></div><div style="position:absolute;left:374px;top:0px;width:2px;height:439px;background:#262626;"></div><div style="position:absolute;left:376px;top:0px;width:14px;height:439px;background:#474747;"></div><div style="position:absolute;left:378px;top:4px;width:8px;height:216px;background:#5c5c5c;border-radius:4px;"></div></div>
<svg style="position:absolute;left:1576px;top:582px;" width="24" height="24" viewBox="0 0 24 24" fill="none" stroke-linecap="round" stroke-linejoin="round"><path d="M12 0.5 L23 12.500 H16 V21.500 a2 2 0 0 1 -2 2 H10 a2 2 0 0 1 -2 -2 V12.500 H1 Z" fill="#bcbcbc"/></svg>
<svg style="position:absolute;left:1576px;top:632px;" width="24" height="24" viewBox="0 0 24 24" fill="none" stroke-linecap="round" stroke-linejoin="round"><path d="M12 23.500 L23 11.500 H16 V2.500 a2 2 0 0 0 -2 -2 H10 a2 2 0 0 0 -2 2 V11.500 H1 Z" fill="#bcbcbc"/></svg>
<svg style="position:absolute;left:1372px;top:1027px;" width="32" height="34" viewBox="0 0 32 34" fill="none" stroke-linecap="round" stroke-linejoin="round"><path d="M3 4 H10 a4 4 0 0 1 4 4 V11 M14 11 H24 a3 3 0 0 1 3 3 V27.500 a3 3 0 0 1 -3 3 H10 a3 3 0 0 1 -3 -3 V11" stroke="#c4c4c4" stroke-width="2"/><path d="M17 12 V19 M12.500 18.500 L17 24 L21.500 18.500 Z" stroke="#c4c4c4" stroke-width="2" fill="#c4c4c4"/></svg>
<svg style="position:absolute;left:1420px;top:1025px;" width="36" height="36" viewBox="0 0 36 36" fill="none" stroke-linecap="round" stroke-linejoin="round"><path d="M20 12 H6 a3 3 0 0 0 -3 3 V30 a3 3 0 0 0 3 3 H21 a3 3 0 0 0 3 -3 V26" stroke="#c4c4c4" stroke-width="2"/><path d="M13 23 H22 a7 7 0 0 0 7 -7 V6" stroke="#c4c4c4" stroke-width="2.2"/><path d="M29 0.500 L33.500 7.500 H24.500 Z" fill="#c4c4c4"/></svg>
<svg style="position:absolute;left:1472px;top:1027px;" width="32" height="34" viewBox="0 0 32 34" fill="none" stroke-linecap="round" stroke-linejoin="round"><rect x="2.5" y="2.500" width="20" height="20" rx="3.500" stroke="#c4c4c4" stroke-width="2"/><rect x="9" y="9.500" width="20" height="21" rx="3.500" stroke="#c4c4c4" stroke-width="2" fill="#4e4e4e"/><path d="M19 14.500 V25.500 M13.500 20 H24.500" stroke="#c4c4c4" stroke-width="2.2"/></svg>
<svg style="position:absolute;left:1520px;top:1027px" width="38" height="36" viewBox="0 0 38 36"><defs><linearGradient id="ng" x1="1" y1="0" x2="0" y2="1"><stop offset="0" stop-color="#4e4e4e"/><stop offset="1" stop-color="#c8c8c8"/></linearGradient></defs><rect x="2.500" y="2.500" width="27" height="27" rx="3" fill="url(#ng)" stroke="#c4c4c4" stroke-width="2"/><circle cx="28.500" cy="27.500" r="7" fill="#c4c4c4" stroke="#4e4e4e" stroke-width="1.500"/><path d="M28.500 23.500 V31.500 M24.500 27.500 H32.500" stroke="#4e4e4e" stroke-width="1.800"/></svg>
<svg style="position:absolute;left:1575px;top:1028px;" width="26" height="31" viewBox="0 0 26 31" fill="none" stroke-linecap="round" stroke-linejoin="round"><path d="M2 6.5 H24 M8.5 6 V3.5 a1.5 1.5 0 0 1 1.5 -1.5 H16 a1.5 1.5 0 0 1 1.5 1.5 V6 M4.5 7 L5.5 26 a3 3 0 0 0 3 2.5 H17.5 a3 3 0 0 0 3 -2.5 L21.500 7 M9.500 11 V24 M13 11 V24 M16.500 11 V24" stroke="#c4c4c4" stroke-width="2" fill="none"/></svg>
<span style="position:absolute;top:540.30px;font-size:22.5px;line-height:27.00px;color:#d6d6d6;white-space:pre;left:1757.00px;transform-origin:0 50%;transform:scaleX(0.9331);">Color:</span>
<div style="position:absolute;left:1824.0px;top:538.5px;width:31px;height:31px;background:#676767;border:2px solid #8e8e8e;border-radius:50%;"></div>
<div style="position:absolute;left:1824.0px;top:580.5px;width:31px;height:31px;background:#676767;border:2px solid #8e8e8e;border-radius:50%;"></div>
<div style="position:absolute;left:1824.0px;top:622.5px;width:31px;height:31px;background:#676767;border:2px solid #8e8e8e;border-radius:50%;"></div><div style="position:absolute;left:1831.5px;top:630px;width:16px;height:16px;background:#e4e4e4;border-radius:50%;"></div>
<span style="position:absolute;top:541.30px;font-size:22.5px;line-height:27.00px;color:#d6d6d6;white-space:pre;left:1864.50px;transform-origin:0 50%;transform:scaleX(0.9453);">Main drawing color</span>
<span style="position:absolute;top:583.30px;font-size:22.5px;line-height:27.00px;color:#d6d6d6;white-space:pre;left:1864.50px;transform-origin:0 50%;transform:scaleX(0.9440);">Sub drawing color</span>
<span style="position:absolute;top:625.30px;font-size:22.5px;line-height:27.00px;color:#d6d6d6;white-space:pre;left:1864.50px;transform-origin:0 50%;transform:scaleX(0.9555);">Specified color</span>
<div style="position:absolute;left:1864px;top:664.5px;width:160px;height:49px;background:#5f5f5f;border:1.5px solid #f0f0f0;border-radius:5px;"></div>
<div style="position:absolute;left:1872px;top:672px;width:144px;height:34px;background:#52808a;border:2px solid #444;"></div>
<div style="position:absolute;left:1654px;top:724.5px;width:31px;height:31px;background:#676767;border:1.5px solid #8a8a8a;border-radius:5px;"></div><svg style="position:absolute;left:1654px;top:724.5px;" width="31" height="31" viewBox="0 0 31 31" fill="none" stroke-linecap="round" stroke-linejoin="round"><path d="M7 16.5 L13 24.5 L24.5 7" stroke="#e6e6e6" stroke-width="4.2" stroke-linecap="butt" stroke-linejoin="miter"/></svg>
<span style="position:absolute;top:727.30px;font-size:22.5px;line-height:27.00px;color:#d6d6d6;white-space:pre;left:1695.00px;transform-origin:0 50%;transform:scaleX(0.9428);">Mixing rate curve</span>
<svg style="position:absolute;left:1766px;top:766px;" width="370" height="310" viewBox="0 0 370 310" fill="none" stroke-linecap="round" stroke-linejoin="round"><rect x="7" y="8" width="355" height="293" fill="none" stroke="#303030" stroke-width="2"/><rect x="94.3" y="7" width="2" height="295" fill="#c6c6c6"/><rect x="182.3" y="7" width="2" height="295" fill="#c6c6c6"/><rect x="270.3" y="7" width="2" height="295" fill="#c6c6c6"/><rect x="6" y="80" width="357" height="2" fill="#c6c6c6"/><rect x="6" y="154" width="357" height="2" fill="#c6c6c6"/><rect x="6" y="226.5" width="357" height="2" fill="#c6c6c6"/><path d="M7 301 L362 8" stroke="#9c9cff" stroke-width="2.4" stroke-linecap="butt"/><path d="M7 301 L362 8" stroke="#e8e8ff" stroke-width="0.9" stroke-dasharray="2 2" stroke-linecap="butt"/><rect x="0" y="294" width="12.500" height="12.500" fill="#9a9aff"/><rect x="354.500" y="1.500" width="12.500" height="12.500" fill="#9a9aff"/></svg>
<span style="position:absolute;top:775.30px;font-size:22.5px;line-height:27.00px;color:#d6d6d6;white-space:pre;left:1663.96px;transform-origin:100% 50%;transform:scaleX(0.9485);">Right color</span>
<span style="position:absolute;top:907.80px;font-size:22.5px;line-height:27.00px;color:#d6d6d6;white-space:pre;left:1703.96px;transform-origin:100% 50%;transform:scaleX(0.9773);">Output</span>
<span style="position:absolute;top:1040.80px;font-size:22.5px;line-height:27.00px;color:#d6d6d6;white-space:pre;left:1678.96px;transform-origin:100% 50%;transform:scaleX(0.9618);">Left color</span>
<span style="position:absolute;top:1069.80px;font-size:22.5px;line-height:27.00px;color:#d6d6d6;white-space:pre;left:1772.50px;transform-origin:0 50%;transform:scaleX(0.9486);">Left node</span>
<span style="position:absolute;top:1069.80px;font-size:22.5px;line-height:27.00px;color:#d6d6d6;white-space:pre;left:1911.50px;transform-origin:0 50%;transform:scaleX(0.9308);">Position</span>
<span style="position:absolute;top:1069.80px;font-size:22.5px;line-height:27.00px;color:#d6d6d6;white-space:pre;left:2023.50px;transform-origin:0 50%;transform:scaleX(0.9373);">Right node</span>
</body></html>
